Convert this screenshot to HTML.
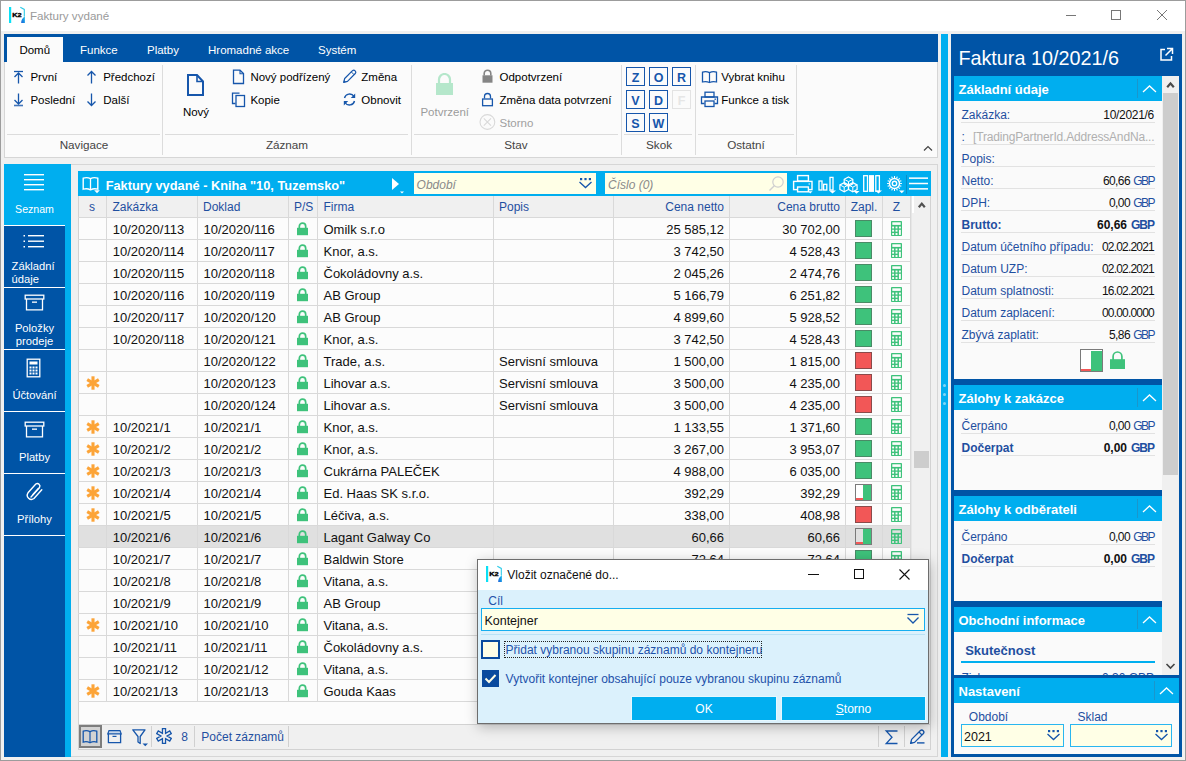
<!DOCTYPE html><html><head><meta charset="utf-8"><style>
*{box-sizing:border-box}
html,body{margin:0;padding:0}
body{width:1186px;height:761px;position:relative;overflow:hidden;background:#f0f0f0;font-family:"Liberation Sans",sans-serif;}
body div{position:absolute}
.t{white-space:nowrap}
</style></head><body>
<div style="left:0px;top:0px;width:1186px;height:761px;border:1px solid #9c9c9c;background:#f0f0f0"></div>
<div style="left:1px;top:1px;width:1184px;height:30px;background:#fff"></div>
<svg style="position:absolute;left:8px;top:6px;" width="18" height="18" viewBox="0 0 18 18"><defs><linearGradient id="kg" x1="0" y1="1" x2="1" y2="0"><stop offset="0" stop-color="#1a5fd8"/><stop offset="1" stop-color="#18c8f0"/></linearGradient></defs><rect x="1" y="1" width="2.2" height="16" fill="#0ae0f5"/><text x="4.2" y="11.2" font-family="Liberation Sans" font-weight="bold" font-size="6" textLength="9.4" lengthAdjust="spacingAndGlyphs" fill="#000" stroke="#000" stroke-width="0.35">K2</text><path d="M12.3 1.2L16.3 3.4V10.5" fill="none" stroke="#2ccbe8" stroke-width="1.1"/><path d="M16.9 10.2V17H13.2Q13 12.8 16.9 10.2Z" fill="url(#kg)"/></svg>
<div class="t" style="left:30px;top:10.00px;font-size:11.6px;line-height:11.6px;color:#9a9a9a;">Faktury vydané</div>
<div style="left:1066px;top:15px;width:10px;height:1px;background:#777"></div>
<div style="left:1111px;top:10px;width:10px;height:10px;border:1px solid #777"></div>
<svg style="position:absolute;left:1157px;top:10px;" width="10" height="10" viewBox="0 0 10 10"><path d="M0 0L10 10M10 0L0 10" stroke="#777" stroke-width="1"/></svg>
<div style="left:4px;top:34px;width:934px;height:28px;background:#0054a6"></div>
<div style="left:7px;top:37px;width:56px;height:25px;background:#fbfbfb"></div>
<div class="t" style="left:19.4px;top:45.00px;font-size:11.5px;line-height:11.5px;color:#000;">Domů</div>
<div class="t" style="left:80px;top:45.00px;font-size:11.5px;line-height:11.5px;color:#fff;">Funkce</div>
<div class="t" style="left:147px;top:45.00px;font-size:11.5px;line-height:11.5px;color:#fff;">Platby</div>
<div class="t" style="left:208px;top:45.00px;font-size:11.5px;line-height:11.5px;color:#fff;">Hromadné akce</div>
<div class="t" style="left:318px;top:45.00px;font-size:11.5px;line-height:11.5px;color:#fff;">Systém</div>
<div style="left:4px;top:62px;width:934px;height:96px;background:#fbfbfb;border:1px solid #d6d6d6;border-top:none"></div>
<div style="left:162px;top:65px;width:1px;height:90px;background:#dcdcdc"></div>
<div style="left:411px;top:65px;width:1px;height:90px;background:#dcdcdc"></div>
<div style="left:621px;top:65px;width:1px;height:90px;background:#dcdcdc"></div>
<div style="left:695px;top:65px;width:1px;height:90px;background:#dcdcdc"></div>
<div style="left:796px;top:65px;width:1px;height:90px;background:#dcdcdc"></div>
<div style="left:7px;top:134px;width:153px;height:1px;background:#dcdcdc"></div>
<div style="left:165px;top:134px;width:243px;height:1px;background:#dcdcdc"></div>
<div style="left:414px;top:134px;width:204px;height:1px;background:#dcdcdc"></div>
<div style="left:624px;top:134px;width:68px;height:1px;background:#dcdcdc"></div>
<div style="left:698px;top:134px;width:96px;height:1px;background:#dcdcdc"></div>
<div class="t" style="left:24.0px;width:120px;text-align:center;top:139.00px;font-size:11.7px;line-height:11.7px;color:#444;">Navigace</div>
<div class="t" style="left:227.0px;width:120px;text-align:center;top:139.00px;font-size:11.7px;line-height:11.7px;color:#444;">Záznam</div>
<div class="t" style="left:456.0px;width:120px;text-align:center;top:139.00px;font-size:11.7px;line-height:11.7px;color:#444;">Stav</div>
<div class="t" style="left:599.0px;width:120px;text-align:center;top:139.00px;font-size:11.7px;line-height:11.7px;color:#444;">Skok</div>
<div class="t" style="left:686.0px;width:120px;text-align:center;top:139.00px;font-size:11.7px;line-height:11.7px;color:#444;">Ostatní</div>
<svg style="position:absolute;left:13px;top:70px;" width="11" height="14" viewBox="0 0 11 14"><path d="M1 1.5H10" stroke="#1656ab" stroke-width="1.3"/><path d="M5.5 3V13.5M1.5 7L5.5 3L9.5 7" fill="none" stroke="#1656ab" stroke-width="1.3"/></svg>
<svg style="position:absolute;left:13px;top:93px;" width="11" height="14" viewBox="0 0 11 14"><path d="M1 12.5H10" stroke="#1656ab" stroke-width="1.6" opacity="0.8"/><path d="M5.5 0.5V11M1.5 7L5.5 11L9.5 7" fill="none" stroke="#1656ab" stroke-width="1.3"/></svg>
<svg style="position:absolute;left:86px;top:70px;" width="11" height="14" viewBox="0 0 11 14"><path d="M5.5 1.5V13.5M1.5 5.5L5.5 1.5L9.5 5.5" fill="none" stroke="#1656ab" stroke-width="1.3"/></svg>
<svg style="position:absolute;left:86px;top:93px;" width="11" height="14" viewBox="0 0 11 14"><path d="M5.5 0.5V12.5M1.5 8.5L5.5 12.5L9.5 8.5" fill="none" stroke="#1656ab" stroke-width="1.3"/></svg>
<div class="t" style="left:30.4px;top:72.00px;font-size:11.5px;line-height:11.5px;color:#000;">První</div>
<div class="t" style="left:30.4px;top:95.00px;font-size:11.5px;line-height:11.5px;color:#000;">Poslední</div>
<div class="t" style="left:103.2px;top:72.00px;font-size:11.5px;line-height:11.5px;color:#000;">Předchozí</div>
<div class="t" style="left:103.2px;top:95.00px;font-size:11.5px;line-height:11.5px;color:#000;">Další</div>
<svg style="position:absolute;left:186px;top:73px;" width="19" height="24" viewBox="0 0 19 24"><path d="M2 2H11L17 8.5V22H2Z" fill="none" stroke="#1656ab" stroke-width="2"/><path d="M11 2V8.5H17" fill="none" stroke="#1656ab" stroke-width="1.6"/></svg>
<div class="t" style="left:166.0px;width:60px;text-align:center;top:107.00px;font-size:11.5px;line-height:11.5px;color:#000;">Nový</div>
<svg style="position:absolute;left:232px;top:69px;" width="13" height="16" viewBox="0 0 13 16"><path d="M1.5 1.2H8L11.5 4.5V14.5H1.5Z" fill="none" stroke="#1656ab" stroke-width="1.3"/><path d="M8 1.2V4.7H11.5" fill="none" stroke="#1656ab" stroke-width="1.1"/></svg>
<svg style="position:absolute;left:231px;top:92px;" width="15" height="16" viewBox="0 0 15 16"><path d="M8.5 1.2H1.5V11.5H4.5" fill="none" stroke="#1656ab" stroke-width="1.3"/><rect x="5" y="3.5" width="8.5" height="11" fill="none" stroke="#1656ab" stroke-width="1.3"/></svg>
<div class="t" style="left:250.4px;top:72.00px;font-size:11.5px;line-height:11.5px;color:#000;">Nový podřízený</div>
<div class="t" style="left:250.4px;top:95.00px;font-size:11.5px;line-height:11.5px;color:#000;">Kopie</div>
<svg style="position:absolute;left:342px;top:69px;" width="15" height="15" viewBox="0 0 15 15"><path d="M1.7 13.3L2.7 9.5L10.5 1.7A2 2 0 0 1 13.3 4.5L5.5 12.3Z" fill="none" stroke="#1656ab" stroke-width="1.2" stroke-linejoin="round"/><path d="M9.3 2.9L12.1 5.7" stroke="#1656ab" stroke-width="1"/><path d="M1.3 13.7L2 11L4 13Z" fill="#1656ab"/></svg>
<svg style="position:absolute;left:342px;top:92px;" width="15" height="15" viewBox="0 0 15 15"><path d="M2.5 6A5.2 5.2 0 0 1 12 4.5" fill="none" stroke="#1656ab" stroke-width="1.4"/><path d="M13.2 1.5V6H8.8Z" fill="#1656ab"/><path d="M12.5 9A5.2 5.2 0 0 1 3 10.5" fill="none" stroke="#1656ab" stroke-width="1.4"/><path d="M1.8 13.5V9H6.2Z" fill="#1656ab"/></svg>
<div class="t" style="left:361.3px;top:72.00px;font-size:11.5px;line-height:11.5px;color:#000;">Změna</div>
<div class="t" style="left:361.3px;top:95.00px;font-size:11.5px;line-height:11.5px;color:#000;">Obnovit</div>
<svg style="position:absolute;left:434px;top:73px;" width="21" height="23" viewBox="0 0 21 23"><path d="M5 10V6.5A5.5 5.5 0 0 1 16 6.5V10" fill="none" stroke="#b5e7cb" stroke-width="2.2"/><rect x="2" y="10" width="17" height="12" fill="#b5e7cb"/></svg>
<div class="t" style="left:404.7px;width:80px;text-align:center;top:107.00px;font-size:11.5px;line-height:11.5px;color:#9b9b9b;">Potvrzení</div>
<svg style="position:absolute;left:481px;top:69px;" width="13" height="15" viewBox="0 0 13 15"><path d="M3.2 6.5V4.5A3.3 3.3 0 0 1 9.8 4.5V6.5" fill="none" stroke="#858585" stroke-width="1.6"/><rect x="1.5" y="6.3" width="10" height="7.4" fill="#858585"/></svg>
<svg style="position:absolute;left:481px;top:92px;" width="13" height="15" viewBox="0 0 13 15"><path d="M3.5 6.5V4.5A3 3 0 0 1 9.5 4.5V6.5" fill="none" stroke="#1656ab" stroke-width="1.3"/><rect x="1.6" y="7" width="9.8" height="6.7" fill="none" stroke="#1656ab" stroke-width="1.3"/></svg>
<svg style="position:absolute;left:479px;top:113px;" width="17" height="18" viewBox="0 0 17 18"><circle cx="8.4" cy="9" r="7.4" fill="none" stroke="#d9d9d9" stroke-width="1.1"/><path d="M4.8 5.4L12 12.6M12 5.4L4.8 12.6" stroke="#d9d9d9" stroke-width="1.1"/></svg>
<div class="t" style="left:499.5px;top:72.00px;font-size:11.5px;line-height:11.5px;color:#000;">Odpotvrzení</div>
<div class="t" style="left:499.5px;top:95.00px;font-size:11.5px;line-height:11.5px;color:#000;">Změna data potvrzení</div>
<div class="t" style="left:499.5px;top:118.00px;font-size:11.5px;line-height:11.5px;color:#a0a0a0;">Storno</div>
<div style="left:626px;top:67px;width:19px;height:19px;border:1.5px solid #1656ab"></div>
<div class="t" style="left:626.0px;width:19px;text-align:center;top:72.00px;font-size:12.5px;line-height:12.5px;color:#1656ab;font-weight:bold;">Z</div>
<div style="left:649px;top:67px;width:19px;height:19px;border:1.5px solid #1656ab"></div>
<div class="t" style="left:649.0px;width:19px;text-align:center;top:72.00px;font-size:12.5px;line-height:12.5px;color:#1656ab;font-weight:bold;">O</div>
<div style="left:672px;top:67px;width:19px;height:19px;border:1.5px solid #1656ab"></div>
<div class="t" style="left:672.0px;width:19px;text-align:center;top:72.00px;font-size:12.5px;line-height:12.5px;color:#1656ab;font-weight:bold;">R</div>
<div style="left:626px;top:90px;width:19px;height:19px;border:1.5px solid #1656ab"></div>
<div class="t" style="left:626.0px;width:19px;text-align:center;top:95.00px;font-size:12.5px;line-height:12.5px;color:#1656ab;font-weight:bold;">V</div>
<div style="left:649px;top:90px;width:19px;height:19px;border:1.5px solid #1656ab"></div>
<div class="t" style="left:649.0px;width:19px;text-align:center;top:95.00px;font-size:12.5px;line-height:12.5px;color:#1656ab;font-weight:bold;">D</div>
<div style="left:672px;top:90px;width:19px;height:19px;border:1px solid #e3e3e3"></div>
<div class="t" style="left:672.0px;width:19px;text-align:center;top:95.00px;font-size:12.5px;line-height:12.5px;color:#e6e6e6;font-weight:bold;">F</div>
<div style="left:626px;top:113px;width:19px;height:19px;border:1.5px solid #1656ab"></div>
<div class="t" style="left:626.0px;width:19px;text-align:center;top:118.00px;font-size:12.5px;line-height:12.5px;color:#1656ab;font-weight:bold;">S</div>
<div style="left:649px;top:113px;width:19px;height:19px;border:1.5px solid #1656ab"></div>
<div class="t" style="left:649.0px;width:19px;text-align:center;top:118.00px;font-size:12.5px;line-height:12.5px;color:#1656ab;font-weight:bold;">W</div>
<svg style="position:absolute;left:701px;top:70px;" width="17" height="14" viewBox="0 0 17 14"><path d="M1.5 2.2Q5 1 8.5 2.7Q12 1 15.5 2.2V12Q12 11 8.5 12.5Q5 11 1.5 12Z" fill="none" stroke="#1656ab" stroke-width="1.3"/><path d="M8.5 2.7V12.5" stroke="#1656ab" stroke-width="1.2"/></svg>
<div class="t" style="left:721.3px;top:72.00px;font-size:11.5px;line-height:11.5px;color:#000;">Vybrat knihu</div>
<svg style="position:absolute;left:700px;top:91px;" width="19" height="17" viewBox="0 0 19 17"><rect x="5" y="1.2" width="9" height="4.8" fill="none" stroke="#1656ab" stroke-width="1.3"/><path d="M4.5 12.5H1.5V6H17.5V12.5H14.5" fill="none" stroke="#1656ab" stroke-width="1.3"/><rect x="5" y="10" width="9" height="5.5" fill="none" stroke="#1656ab" stroke-width="1.3"/><rect x="14.5" y="7.5" width="1.4" height="1.4" fill="#1656ab"/></svg>
<div class="t" style="left:721.3px;top:95.00px;font-size:11.5px;line-height:11.5px;color:#000;">Funkce a tisk</div>
<svg style="position:absolute;left:923px;top:145px;" width="10" height="7" viewBox="0 0 10 7"><path d="M1 5.5L5 1.5L9 5.5" fill="none" stroke="#444" stroke-width="1.2"/></svg>
<div style="left:4px;top:164px;width:67px;height:593px;background:#0054a6"></div>
<div style="left:65px;top:164px;width:6px;height:593px;background:#00aeef"></div>
<div style="left:4px;top:164px;width:61px;height:61px;background:#00aeef"></div>
<div style="left:4px;top:225px;width:61px;height:1px;background:#fff"></div>
<div style="left:4px;top:287px;width:61px;height:1px;background:#fff"></div>
<div style="left:4px;top:349px;width:61px;height:1px;background:#fff"></div>
<div style="left:4px;top:411px;width:61px;height:1px;background:#fff"></div>
<div style="left:4px;top:473px;width:61px;height:1px;background:#fff"></div>
<div style="left:4px;top:535px;width:61px;height:1px;background:#fff"></div>
<svg style="position:absolute;left:23px;top:173px;" width="22" height="18" viewBox="0 0 22 18"><rect x="1" y="1" width="20" height="1.4" fill="#fff"/><rect x="1" y="6" width="20" height="1.4" fill="#fff"/><rect x="1" y="11" width="20" height="1.4" fill="#fff"/><rect x="1" y="16" width="20" height="1.4" fill="#fff"/></svg>
<svg style="position:absolute;left:22px;top:233px;" width="24" height="16" viewBox="0 0 24 16"><rect x="1.5" y="2.0" width="1.5" height="1.5" fill="#fff"/><rect x="6" y="2.0" width="16" height="1.4" fill="#fff"/><rect x="1.5" y="7.5" width="1.5" height="1.5" fill="#fff"/><rect x="6" y="7.5" width="16" height="1.4" fill="#fff"/><rect x="1.5" y="13.0" width="1.5" height="1.5" fill="#fff"/><rect x="6" y="13.0" width="16" height="1.4" fill="#fff"/></svg>
<svg style="position:absolute;left:24px;top:294px;" width="21" height="17" viewBox="0 0 21 17"><rect x="1.2" y="1.2" width="18.6" height="3.8" fill="none" stroke="#fff" stroke-width="1.3"/><path d="M2.5 5V15.8H18.5V5" fill="none" stroke="#fff" stroke-width="1.3"/><rect x="8" y="7.5" width="5" height="1.3" fill="#fff"/></svg>
<svg style="position:absolute;left:24px;top:421px;" width="21" height="17" viewBox="0 0 21 17"><rect x="1.2" y="1.2" width="18.6" height="3.8" fill="none" stroke="#fff" stroke-width="1.3"/><path d="M2.5 5V15.8H18.5V5" fill="none" stroke="#fff" stroke-width="1.3"/><rect x="8" y="7.5" width="5" height="1.3" fill="#fff"/></svg>
<svg style="position:absolute;left:26px;top:358px;" width="15" height="20" viewBox="0 0 15 20"><rect x="1.2" y="1.2" width="12.6" height="17.6" fill="none" stroke="#fff" stroke-width="1.3"/><rect x="3.5" y="3.5" width="8" height="3" fill="#fff"/><rect x="3.5" y="8.5" width="2" height="2" fill="#fff"/><rect x="3.5" y="11.5" width="2" height="2" fill="#fff"/><rect x="3.5" y="14.5" width="2" height="2" fill="#fff"/><rect x="6.5" y="8.5" width="2" height="2" fill="#fff"/><rect x="6.5" y="11.5" width="2" height="2" fill="#fff"/><rect x="6.5" y="14.5" width="2" height="2" fill="#fff"/><rect x="9.5" y="8.5" width="2" height="2" fill="#fff"/><rect x="9.5" y="11.5" width="2" height="2" fill="#fff"/><rect x="9.5" y="14.5" width="2" height="2" fill="#fff"/></svg>
<svg style="position:absolute;left:25px;top:481px;transform:rotate(0deg)" width="19" height="21" viewBox="0 0 19 21"><path d="M6 16L14.5 6.5A2.6 2.6 0 0 0 10.8 3L3 11.8A4.2 4.2 0 0 0 9 17.5L16.8 8.7" fill="none" stroke="#fff" stroke-width="1.4" stroke-linecap="round"/><path d="M8 13.5L13.2 7.6" fill="none" stroke="#fff" stroke-width="1.4" stroke-linecap="round"/></svg>
<div class="t" style="left:4.5px;width:60px;text-align:center;top:204.00px;font-size:10.6px;line-height:10.6px;color:#fff;">Seznam</div>
<div class="t" style="left:11.6px;top:261.00px;font-size:11.2px;line-height:11.2px;color:#fff;">Základní</div>
<div class="t" style="left:11.6px;top:274.00px;font-size:11.2px;line-height:11.2px;color:#fff;">údaje</div>
<div class="t" style="left:4.5px;width:60px;text-align:center;top:323.00px;font-size:11.2px;line-height:11.2px;color:#fff;">Položky</div>
<div class="t" style="left:4.5px;width:60px;text-align:center;top:336.00px;font-size:11.2px;line-height:11.2px;color:#fff;">prodeje</div>
<div class="t" style="left:4.5px;width:60px;text-align:center;top:390.00px;font-size:11.2px;line-height:11.2px;color:#fff;">Účtování</div>
<div class="t" style="left:4.5px;width:60px;text-align:center;top:452.00px;font-size:11.2px;line-height:11.2px;color:#fff;">Platby</div>
<div class="t" style="left:4.5px;width:60px;text-align:center;top:514.00px;font-size:11.2px;line-height:11.2px;color:#fff;">Přílohy</div>
<div style="left:71px;top:164px;width:867px;height:593px;border:1px solid #d6d6d6;border-left:none;background:#f0f0f0"></div>
<div style="left:78px;top:171px;width:853px;height:25px;background:#00aeef"></div>
<svg style="position:absolute;left:82px;top:176px;" width="18" height="18" viewBox="0 0 18 18"><path d="M1.2 2.2Q5 0.8 8.5 2.6Q12 0.8 15.8 2.2V13.2Q12 12 8.5 13.8Q5 12 1.2 13.2Z" fill="none" stroke="#fff" stroke-width="1.4"/><path d="M8.5 2.6V13.8" stroke="#fff" stroke-width="1.3"/><path d="M12.2 14.2H17.8L15 17.2Z" fill="#fff"/></svg>
<div class="t" style="left:105.7px;top:180.00px;font-size:12.8px;line-height:12.8px;color:#fff;font-weight:bold;">Faktury vydané - Kniha "10, Tuzemsko"</div>
<svg style="position:absolute;left:390px;top:176px;" width="16" height="19" viewBox="0 0 16 19"><path d="M2 2L9 8L2 14Z" fill="#fff"/><path d="M10 15.5H14L12 17.5Z" fill="#fff"/></svg>
<div style="left:414px;top:173px;width:182px;height:21px;background:#ffffe6"></div>
<div class="t" style="left:416.6px;top:179.00px;font-size:12px;line-height:12px;color:#8a8a8a;font-style:italic">Období</div>
<svg style="position:absolute;left:578px;top:177px;" width="15" height="12" viewBox="0 0 15 12"><rect x="2" y="1" width="2.2" height="2.2" fill="#1656ab"/><rect x="6.4" y="1" width="2.2" height="2.2" fill="#1656ab"/><rect x="10.8" y="1" width="2.2" height="2.2" fill="#1656ab"/><path d="M1.5 5L7.5 10.5L13.5 5" fill="none" stroke="#1656ab" stroke-width="1.3"/></svg>
<div style="left:605px;top:173px;width:182px;height:21px;background:#ffffe6"></div>
<div class="t" style="left:608px;top:179.00px;font-size:12px;line-height:12px;color:#8a8a8a;font-style:italic">Číslo (0)</div>
<svg style="position:absolute;left:768px;top:175px;" width="17" height="17" viewBox="0 0 17 17"><circle cx="10" cy="7" r="5.2" fill="none" stroke="#cfcfcf" stroke-width="1.2"/><path d="M6.3 10.7L1.5 15.5" stroke="#cfcfcf" stroke-width="1.4"/></svg>
<svg style="position:absolute;left:791px;top:174px;" width="23" height="20" viewBox="0 0 23 20"><rect x="6.6" y="1.6" width="10.8" height="5.4" fill="none" stroke="#fff" stroke-width="1.4"/><rect x="2.6" y="7.4" width="18.4" height="8.2" fill="none" stroke="#fff" stroke-width="1.4"/><rect x="6.6" y="13" width="10.8" height="4.8" fill="#00aeef" stroke="#fff" stroke-width="1.4"/><rect x="17.6" y="9.4" width="1.2" height="1.2" fill="#fff"/><path d="M17 17.2H21.5L19.25 19.5Z" fill="#fff"/></svg>
<svg style="position:absolute;left:816px;top:174px;" width="21" height="21" viewBox="0 0 21 21"><rect x="3" y="7" width="3" height="9" fill="none" stroke="#fff" stroke-width="1.3"/><rect x="7.6" y="10.3" width="3.2" height="5.7" fill="none" stroke="#fff" stroke-width="1.3"/><rect x="14" y="3.4" width="3" height="12.6" fill="none" stroke="#fff" stroke-width="1.3"/><path d="M13 16.5H20L16.5 19.5Z" fill="#fff"/></svg>
<svg style="position:absolute;left:839px;top:174px;" width="21" height="21" viewBox="0 0 21 21"><path d="M9.50 3.00L13.80 5.30L13.80 9.90L9.50 12.20L5.20 9.90L5.20 5.30Z" fill="none" stroke="#fff" stroke-width="1.2"/><path d="M5.20 5.30L9.50 7.60L13.80 5.30M9.50 7.60V12.20" fill="none" stroke="#fff" stroke-width="1"/><path d="M5.20 8.60L9.50 10.90L9.50 15.50L5.20 17.80L0.90 15.50L0.90 10.90Z" fill="none" stroke="#fff" stroke-width="1.2"/><path d="M0.90 10.90L5.20 13.20L9.50 10.90M5.20 13.20V17.80" fill="none" stroke="#fff" stroke-width="1"/><path d="M13.80 8.60L18.10 10.90L18.10 15.50L13.80 17.80L9.50 15.50L9.50 10.90Z" fill="none" stroke="#fff" stroke-width="1.2"/><path d="M9.50 10.90L13.80 13.20L18.10 10.90M13.80 13.20V17.80" fill="none" stroke="#fff" stroke-width="1"/><path d="M14.5 17H20.5L17.5 19.8Z" fill="#fff"/></svg>
<svg style="position:absolute;left:862px;top:174px;" width="21" height="21" viewBox="0 0 21 21"><rect x="1.7" y="1.7" width="3.8" height="15.6" fill="none" stroke="#fff" stroke-width="1.3"/><rect x="7" y="1.1" width="5" height="16.8" fill="#fff"/><rect x="13.8" y="1.7" width="3.6" height="15.6" fill="none" stroke="#fff" stroke-width="1.3"/><path d="M13 16.5H20L16.5 19.5Z" fill="#fff"/></svg>
<svg style="position:absolute;left:886px;top:174px;" width="20" height="21" viewBox="0 0 20 21"><circle cx="8.5" cy="9.5" r="5" fill="none" stroke="#fff" stroke-width="1.5"/><circle cx="8.5" cy="9.5" r="2.2" fill="none" stroke="#fff" stroke-width="1.4"/><path d="M14.10 9.50L15.90 9.50M13.67 11.64L15.34 12.33M12.46 13.46L13.73 14.73M10.64 14.67L11.33 16.34M8.50 15.10L8.50 16.90M6.36 14.67L5.67 16.34M4.54 13.46L3.27 14.73M3.33 11.64L1.66 12.33M2.90 9.50L1.10 9.50M3.33 7.36L1.66 6.67M4.54 5.54L3.27 4.27M6.36 4.33L5.67 2.66M8.50 3.90L8.50 2.10M10.64 4.33L11.33 2.66M12.46 5.54L13.73 4.27M13.67 7.36L15.34 6.67" stroke="#fff" stroke-width="1.1"/><path d="M13 16.4H18.5L15.75 19.2Z" fill="#fff"/></svg>
<div style="left:906px;top:175px;width:1px;height:19px;background:#0a8fc8"></div>
<svg style="position:absolute;left:908px;top:176px;" width="22" height="16" viewBox="0 0 22 16"><rect x="1" y="1.4" width="19" height="1.5" fill="#fff"/><rect x="1" y="6.75" width="19" height="1.5" fill="#fff"/><rect x="1" y="12.1" width="19" height="1.5" fill="#fff"/></svg>
<div style="left:78px;top:196px;width:853px;height:22px;background:#f0f0f0;border-left:1px solid #d2d2d2"></div>
<div style="left:106px;top:196px;width:1px;height:505px;background:#d9d9d9"></div>
<div style="left:197px;top:196px;width:1px;height:505px;background:#d9d9d9"></div>
<div style="left:288px;top:196px;width:1px;height:505px;background:#d9d9d9"></div>
<div style="left:317px;top:196px;width:1px;height:505px;background:#d9d9d9"></div>
<div style="left:493px;top:196px;width:1px;height:505px;background:#d9d9d9"></div>
<div style="left:613px;top:196px;width:1px;height:505px;background:#d9d9d9"></div>
<div style="left:729px;top:196px;width:1px;height:505px;background:#d9d9d9"></div>
<div style="left:845px;top:196px;width:1px;height:505px;background:#d9d9d9"></div>
<div style="left:882px;top:196px;width:1px;height:505px;background:#d9d9d9"></div>
<div style="left:910px;top:196px;width:1px;height:505px;background:#d9d9d9"></div>
<div style="left:78px;top:217px;width:833px;height:1px;background:#d9d9d9"></div>
<div class="t" style="left:82.0px;width:20px;text-align:center;top:201.00px;font-size:12px;line-height:12px;color:#1f4fa0;">s</div>
<div class="t" style="left:112.5px;top:201.00px;font-size:12px;line-height:12px;color:#1f4fa0;">Zakázka</div>
<div class="t" style="left:203px;top:201.00px;font-size:12px;line-height:12px;color:#1f4fa0;">Doklad</div>
<div class="t" style="left:294px;top:201.00px;font-size:12px;line-height:12px;color:#1f4fa0;">P/S</div>
<div class="t" style="left:323.5px;top:201.00px;font-size:12px;line-height:12px;color:#1f4fa0;">Firma</div>
<div class="t" style="left:499px;top:201.00px;font-size:12px;line-height:12px;color:#1f4fa0;">Popis</div>
<div class="t" style="right:462px;top:201.00px;font-size:12px;line-height:12px;color:#1f4fa0;">Cena netto</div>
<div class="t" style="right:346px;top:201.00px;font-size:12px;line-height:12px;color:#1f4fa0;">Cena brutto</div>
<div class="t" style="left:846.0px;width:36px;text-align:center;top:201.00px;font-size:12px;line-height:12px;color:#1f4fa0;">Zapl.</div>
<div class="t" style="left:886.5px;width:20px;text-align:center;top:201.00px;font-size:12px;line-height:12px;color:#1f4fa0;">Z</div>
<div style="left:78px;top:218px;width:833px;height:506px;background:#fcfcfc;border-left:1px solid #d2d2d2"></div>
<div style="left:78px;top:239px;width:833px;height:1px;background:#d9d9d9"></div>
<div class="t" style="left:112.8px;top:223.00px;font-size:13px;line-height:13px;color:#111;">10/2020/113</div>
<div class="t" style="left:203.5px;top:223.00px;font-size:13px;line-height:13px;color:#111;">10/2020/116</div>
<svg style="position:absolute;left:296px;top:222px;" width="13" height="14" viewBox="0 0 13 14"><path d="M3.3 6V4.4A3.2 3.2 0 0 1 9.7 4.4V6" fill="none" stroke="#3ec27b" stroke-width="1.7"/><rect x="1" y="5.8" width="11" height="7.4" fill="#3ec27b"/></svg>
<div class="t" style="left:323.5px;top:223.00px;font-size:13px;line-height:13px;color:#111;">Omilk s.r.o</div>
<div class="t" style="right:462px;top:223.00px;font-size:13px;line-height:13px;color:#111;">25 585,12</div>
<div class="t" style="right:346px;top:223.00px;font-size:13px;line-height:13px;color:#111;">30 702,00</div>
<div style="left:855px;top:220px;width:17px;height:17px;background:#3ec27b;border:1px solid #4a8a66"></div>
<svg style="position:absolute;left:891px;top:221px;" width="11" height="15" viewBox="0 0 11 15"><rect x="0" y="0" width="11" height="15" rx="0.8" fill="#3ec27b"/><rect x="1.3" y="1.3" width="8.4" height="2.6" fill="#fcfcfc"/><rect x="1.1500000000000001" y="5.55" width="1.9" height="1.9" fill="#fcfcfc"/><rect x="4.55" y="5.55" width="1.9" height="1.9" fill="#fcfcfc"/><rect x="7.95" y="5.55" width="1.9" height="1.9" fill="#fcfcfc"/><rect x="1.1500000000000001" y="8.75" width="1.9" height="1.9" fill="#fcfcfc"/><rect x="4.55" y="8.75" width="1.9" height="1.9" fill="#fcfcfc"/><rect x="1.1500000000000001" y="12.05" width="1.9" height="1.9" fill="#fcfcfc"/><rect x="4.55" y="12.05" width="1.9" height="1.9" fill="#fcfcfc"/><rect x="7.95" y="8.75" width="1.9" height="5.2" fill="#fcfcfc"/></svg>
<div style="left:78px;top:261px;width:833px;height:1px;background:#d9d9d9"></div>
<div class="t" style="left:112.8px;top:245.00px;font-size:13px;line-height:13px;color:#111;">10/2020/114</div>
<div class="t" style="left:203.5px;top:245.00px;font-size:13px;line-height:13px;color:#111;">10/2020/117</div>
<svg style="position:absolute;left:296px;top:244px;" width="13" height="14" viewBox="0 0 13 14"><path d="M3.3 6V4.4A3.2 3.2 0 0 1 9.7 4.4V6" fill="none" stroke="#3ec27b" stroke-width="1.7"/><rect x="1" y="5.8" width="11" height="7.4" fill="#3ec27b"/></svg>
<div class="t" style="left:323.5px;top:245.00px;font-size:13px;line-height:13px;color:#111;">Knor, a.s.</div>
<div class="t" style="right:462px;top:245.00px;font-size:13px;line-height:13px;color:#111;">3 742,50</div>
<div class="t" style="right:346px;top:245.00px;font-size:13px;line-height:13px;color:#111;">4 528,43</div>
<div style="left:855px;top:242px;width:17px;height:17px;background:#3ec27b;border:1px solid #4a8a66"></div>
<svg style="position:absolute;left:891px;top:243px;" width="11" height="15" viewBox="0 0 11 15"><rect x="0" y="0" width="11" height="15" rx="0.8" fill="#3ec27b"/><rect x="1.3" y="1.3" width="8.4" height="2.6" fill="#fcfcfc"/><rect x="1.1500000000000001" y="5.55" width="1.9" height="1.9" fill="#fcfcfc"/><rect x="4.55" y="5.55" width="1.9" height="1.9" fill="#fcfcfc"/><rect x="7.95" y="5.55" width="1.9" height="1.9" fill="#fcfcfc"/><rect x="1.1500000000000001" y="8.75" width="1.9" height="1.9" fill="#fcfcfc"/><rect x="4.55" y="8.75" width="1.9" height="1.9" fill="#fcfcfc"/><rect x="1.1500000000000001" y="12.05" width="1.9" height="1.9" fill="#fcfcfc"/><rect x="4.55" y="12.05" width="1.9" height="1.9" fill="#fcfcfc"/><rect x="7.95" y="8.75" width="1.9" height="5.2" fill="#fcfcfc"/></svg>
<div style="left:78px;top:283px;width:833px;height:1px;background:#d9d9d9"></div>
<div class="t" style="left:112.8px;top:267.00px;font-size:13px;line-height:13px;color:#111;">10/2020/115</div>
<div class="t" style="left:203.5px;top:267.00px;font-size:13px;line-height:13px;color:#111;">10/2020/118</div>
<svg style="position:absolute;left:296px;top:266px;" width="13" height="14" viewBox="0 0 13 14"><path d="M3.3 6V4.4A3.2 3.2 0 0 1 9.7 4.4V6" fill="none" stroke="#3ec27b" stroke-width="1.7"/><rect x="1" y="5.8" width="11" height="7.4" fill="#3ec27b"/></svg>
<div class="t" style="left:323.5px;top:267.00px;font-size:13px;line-height:13px;color:#111;">Čokoládovny a.s.</div>
<div class="t" style="right:462px;top:267.00px;font-size:13px;line-height:13px;color:#111;">2 045,26</div>
<div class="t" style="right:346px;top:267.00px;font-size:13px;line-height:13px;color:#111;">2 474,76</div>
<div style="left:855px;top:264px;width:17px;height:17px;background:#3ec27b;border:1px solid #4a8a66"></div>
<svg style="position:absolute;left:891px;top:265px;" width="11" height="15" viewBox="0 0 11 15"><rect x="0" y="0" width="11" height="15" rx="0.8" fill="#3ec27b"/><rect x="1.3" y="1.3" width="8.4" height="2.6" fill="#fcfcfc"/><rect x="1.1500000000000001" y="5.55" width="1.9" height="1.9" fill="#fcfcfc"/><rect x="4.55" y="5.55" width="1.9" height="1.9" fill="#fcfcfc"/><rect x="7.95" y="5.55" width="1.9" height="1.9" fill="#fcfcfc"/><rect x="1.1500000000000001" y="8.75" width="1.9" height="1.9" fill="#fcfcfc"/><rect x="4.55" y="8.75" width="1.9" height="1.9" fill="#fcfcfc"/><rect x="1.1500000000000001" y="12.05" width="1.9" height="1.9" fill="#fcfcfc"/><rect x="4.55" y="12.05" width="1.9" height="1.9" fill="#fcfcfc"/><rect x="7.95" y="8.75" width="1.9" height="5.2" fill="#fcfcfc"/></svg>
<div style="left:78px;top:305px;width:833px;height:1px;background:#d9d9d9"></div>
<div class="t" style="left:112.8px;top:289.00px;font-size:13px;line-height:13px;color:#111;">10/2020/116</div>
<div class="t" style="left:203.5px;top:289.00px;font-size:13px;line-height:13px;color:#111;">10/2020/119</div>
<svg style="position:absolute;left:296px;top:288px;" width="13" height="14" viewBox="0 0 13 14"><path d="M3.3 6V4.4A3.2 3.2 0 0 1 9.7 4.4V6" fill="none" stroke="#3ec27b" stroke-width="1.7"/><rect x="1" y="5.8" width="11" height="7.4" fill="#3ec27b"/></svg>
<div class="t" style="left:323.5px;top:289.00px;font-size:13px;line-height:13px;color:#111;">AB Group</div>
<div class="t" style="right:462px;top:289.00px;font-size:13px;line-height:13px;color:#111;">5 166,79</div>
<div class="t" style="right:346px;top:289.00px;font-size:13px;line-height:13px;color:#111;">6 251,82</div>
<div style="left:855px;top:286px;width:17px;height:17px;background:#3ec27b;border:1px solid #4a8a66"></div>
<svg style="position:absolute;left:891px;top:287px;" width="11" height="15" viewBox="0 0 11 15"><rect x="0" y="0" width="11" height="15" rx="0.8" fill="#3ec27b"/><rect x="1.3" y="1.3" width="8.4" height="2.6" fill="#fcfcfc"/><rect x="1.1500000000000001" y="5.55" width="1.9" height="1.9" fill="#fcfcfc"/><rect x="4.55" y="5.55" width="1.9" height="1.9" fill="#fcfcfc"/><rect x="7.95" y="5.55" width="1.9" height="1.9" fill="#fcfcfc"/><rect x="1.1500000000000001" y="8.75" width="1.9" height="1.9" fill="#fcfcfc"/><rect x="4.55" y="8.75" width="1.9" height="1.9" fill="#fcfcfc"/><rect x="1.1500000000000001" y="12.05" width="1.9" height="1.9" fill="#fcfcfc"/><rect x="4.55" y="12.05" width="1.9" height="1.9" fill="#fcfcfc"/><rect x="7.95" y="8.75" width="1.9" height="5.2" fill="#fcfcfc"/></svg>
<div style="left:78px;top:327px;width:833px;height:1px;background:#d9d9d9"></div>
<div class="t" style="left:112.8px;top:311.00px;font-size:13px;line-height:13px;color:#111;">10/2020/117</div>
<div class="t" style="left:203.5px;top:311.00px;font-size:13px;line-height:13px;color:#111;">10/2020/120</div>
<svg style="position:absolute;left:296px;top:310px;" width="13" height="14" viewBox="0 0 13 14"><path d="M3.3 6V4.4A3.2 3.2 0 0 1 9.7 4.4V6" fill="none" stroke="#3ec27b" stroke-width="1.7"/><rect x="1" y="5.8" width="11" height="7.4" fill="#3ec27b"/></svg>
<div class="t" style="left:323.5px;top:311.00px;font-size:13px;line-height:13px;color:#111;">AB Group</div>
<div class="t" style="right:462px;top:311.00px;font-size:13px;line-height:13px;color:#111;">4 899,60</div>
<div class="t" style="right:346px;top:311.00px;font-size:13px;line-height:13px;color:#111;">5 928,52</div>
<div style="left:855px;top:308px;width:17px;height:17px;background:#3ec27b;border:1px solid #4a8a66"></div>
<svg style="position:absolute;left:891px;top:309px;" width="11" height="15" viewBox="0 0 11 15"><rect x="0" y="0" width="11" height="15" rx="0.8" fill="#3ec27b"/><rect x="1.3" y="1.3" width="8.4" height="2.6" fill="#fcfcfc"/><rect x="1.1500000000000001" y="5.55" width="1.9" height="1.9" fill="#fcfcfc"/><rect x="4.55" y="5.55" width="1.9" height="1.9" fill="#fcfcfc"/><rect x="7.95" y="5.55" width="1.9" height="1.9" fill="#fcfcfc"/><rect x="1.1500000000000001" y="8.75" width="1.9" height="1.9" fill="#fcfcfc"/><rect x="4.55" y="8.75" width="1.9" height="1.9" fill="#fcfcfc"/><rect x="1.1500000000000001" y="12.05" width="1.9" height="1.9" fill="#fcfcfc"/><rect x="4.55" y="12.05" width="1.9" height="1.9" fill="#fcfcfc"/><rect x="7.95" y="8.75" width="1.9" height="5.2" fill="#fcfcfc"/></svg>
<div style="left:78px;top:349px;width:833px;height:1px;background:#d9d9d9"></div>
<div class="t" style="left:112.8px;top:333.00px;font-size:13px;line-height:13px;color:#111;">10/2020/118</div>
<div class="t" style="left:203.5px;top:333.00px;font-size:13px;line-height:13px;color:#111;">10/2020/121</div>
<svg style="position:absolute;left:296px;top:332px;" width="13" height="14" viewBox="0 0 13 14"><path d="M3.3 6V4.4A3.2 3.2 0 0 1 9.7 4.4V6" fill="none" stroke="#3ec27b" stroke-width="1.7"/><rect x="1" y="5.8" width="11" height="7.4" fill="#3ec27b"/></svg>
<div class="t" style="left:323.5px;top:333.00px;font-size:13px;line-height:13px;color:#111;">Knor, a.s.</div>
<div class="t" style="right:462px;top:333.00px;font-size:13px;line-height:13px;color:#111;">3 742,50</div>
<div class="t" style="right:346px;top:333.00px;font-size:13px;line-height:13px;color:#111;">4 528,43</div>
<div style="left:855px;top:330px;width:17px;height:17px;background:#3ec27b;border:1px solid #4a8a66"></div>
<svg style="position:absolute;left:891px;top:331px;" width="11" height="15" viewBox="0 0 11 15"><rect x="0" y="0" width="11" height="15" rx="0.8" fill="#3ec27b"/><rect x="1.3" y="1.3" width="8.4" height="2.6" fill="#fcfcfc"/><rect x="1.1500000000000001" y="5.55" width="1.9" height="1.9" fill="#fcfcfc"/><rect x="4.55" y="5.55" width="1.9" height="1.9" fill="#fcfcfc"/><rect x="7.95" y="5.55" width="1.9" height="1.9" fill="#fcfcfc"/><rect x="1.1500000000000001" y="8.75" width="1.9" height="1.9" fill="#fcfcfc"/><rect x="4.55" y="8.75" width="1.9" height="1.9" fill="#fcfcfc"/><rect x="1.1500000000000001" y="12.05" width="1.9" height="1.9" fill="#fcfcfc"/><rect x="4.55" y="12.05" width="1.9" height="1.9" fill="#fcfcfc"/><rect x="7.95" y="8.75" width="1.9" height="5.2" fill="#fcfcfc"/></svg>
<div style="left:78px;top:371px;width:833px;height:1px;background:#d9d9d9"></div>
<div class="t" style="left:203.5px;top:355.00px;font-size:13px;line-height:13px;color:#111;">10/2020/122</div>
<svg style="position:absolute;left:296px;top:354px;" width="13" height="14" viewBox="0 0 13 14"><path d="M3.3 6V4.4A3.2 3.2 0 0 1 9.7 4.4V6" fill="none" stroke="#3ec27b" stroke-width="1.7"/><rect x="1" y="5.8" width="11" height="7.4" fill="#3ec27b"/></svg>
<div class="t" style="left:323.5px;top:355.00px;font-size:13px;line-height:13px;color:#111;">Trade, a.s.</div>
<div class="t" style="left:499px;top:355.00px;font-size:13px;line-height:13px;color:#111;">Servisní smlouva</div>
<div class="t" style="right:462px;top:355.00px;font-size:13px;line-height:13px;color:#111;">1 500,00</div>
<div class="t" style="right:346px;top:355.00px;font-size:13px;line-height:13px;color:#111;">1 815,00</div>
<div style="left:855px;top:352px;width:17px;height:17px;background:#f25757;border:1px solid #8a4a4a"></div>
<svg style="position:absolute;left:891px;top:353px;" width="11" height="15" viewBox="0 0 11 15"><rect x="0" y="0" width="11" height="15" rx="0.8" fill="#3ec27b"/><rect x="1.3" y="1.3" width="8.4" height="2.6" fill="#fcfcfc"/><rect x="1.1500000000000001" y="5.55" width="1.9" height="1.9" fill="#fcfcfc"/><rect x="4.55" y="5.55" width="1.9" height="1.9" fill="#fcfcfc"/><rect x="7.95" y="5.55" width="1.9" height="1.9" fill="#fcfcfc"/><rect x="1.1500000000000001" y="8.75" width="1.9" height="1.9" fill="#fcfcfc"/><rect x="4.55" y="8.75" width="1.9" height="1.9" fill="#fcfcfc"/><rect x="1.1500000000000001" y="12.05" width="1.9" height="1.9" fill="#fcfcfc"/><rect x="4.55" y="12.05" width="1.9" height="1.9" fill="#fcfcfc"/><rect x="7.95" y="8.75" width="1.9" height="5.2" fill="#fcfcfc"/></svg>
<div style="left:78px;top:393px;width:833px;height:1px;background:#d9d9d9"></div>
<svg style="position:absolute;left:85.6px;top:376px;" width="14" height="14" viewBox="0 0 14 14"><g stroke="#fca438" stroke-width="3.1"><path d="M7 0.3V13.7"/><path d="M1.2 3.65L12.8 10.35"/><path d="M1.2 10.35L12.8 3.65"/></g></svg>
<div class="t" style="left:203.5px;top:377.00px;font-size:13px;line-height:13px;color:#111;">10/2020/123</div>
<svg style="position:absolute;left:296px;top:376px;" width="13" height="14" viewBox="0 0 13 14"><path d="M3.3 6V4.4A3.2 3.2 0 0 1 9.7 4.4V6" fill="none" stroke="#3ec27b" stroke-width="1.7"/><rect x="1" y="5.8" width="11" height="7.4" fill="#3ec27b"/></svg>
<div class="t" style="left:323.5px;top:377.00px;font-size:13px;line-height:13px;color:#111;">Lihovar a.s.</div>
<div class="t" style="left:499px;top:377.00px;font-size:13px;line-height:13px;color:#111;">Servisní smlouva</div>
<div class="t" style="right:462px;top:377.00px;font-size:13px;line-height:13px;color:#111;">3 500,00</div>
<div class="t" style="right:346px;top:377.00px;font-size:13px;line-height:13px;color:#111;">4 235,00</div>
<div style="left:855px;top:374px;width:17px;height:17px;background:#f25757;border:1px solid #8a4a4a"></div>
<svg style="position:absolute;left:891px;top:375px;" width="11" height="15" viewBox="0 0 11 15"><rect x="0" y="0" width="11" height="15" rx="0.8" fill="#3ec27b"/><rect x="1.3" y="1.3" width="8.4" height="2.6" fill="#fcfcfc"/><rect x="1.1500000000000001" y="5.55" width="1.9" height="1.9" fill="#fcfcfc"/><rect x="4.55" y="5.55" width="1.9" height="1.9" fill="#fcfcfc"/><rect x="7.95" y="5.55" width="1.9" height="1.9" fill="#fcfcfc"/><rect x="1.1500000000000001" y="8.75" width="1.9" height="1.9" fill="#fcfcfc"/><rect x="4.55" y="8.75" width="1.9" height="1.9" fill="#fcfcfc"/><rect x="1.1500000000000001" y="12.05" width="1.9" height="1.9" fill="#fcfcfc"/><rect x="4.55" y="12.05" width="1.9" height="1.9" fill="#fcfcfc"/><rect x="7.95" y="8.75" width="1.9" height="5.2" fill="#fcfcfc"/></svg>
<div style="left:78px;top:415px;width:833px;height:1px;background:#d9d9d9"></div>
<div class="t" style="left:203.5px;top:399.00px;font-size:13px;line-height:13px;color:#111;">10/2020/124</div>
<svg style="position:absolute;left:296px;top:398px;" width="13" height="14" viewBox="0 0 13 14"><path d="M3.3 6V4.4A3.2 3.2 0 0 1 9.7 4.4V6" fill="none" stroke="#3ec27b" stroke-width="1.7"/><rect x="1" y="5.8" width="11" height="7.4" fill="#3ec27b"/></svg>
<div class="t" style="left:323.5px;top:399.00px;font-size:13px;line-height:13px;color:#111;">Lihovar a.s.</div>
<div class="t" style="left:499px;top:399.00px;font-size:13px;line-height:13px;color:#111;">Servisní smlouva</div>
<div class="t" style="right:462px;top:399.00px;font-size:13px;line-height:13px;color:#111;">3 500,00</div>
<div class="t" style="right:346px;top:399.00px;font-size:13px;line-height:13px;color:#111;">4 235,00</div>
<div style="left:855px;top:396px;width:17px;height:17px;background:#f25757;border:1px solid #8a4a4a"></div>
<svg style="position:absolute;left:891px;top:397px;" width="11" height="15" viewBox="0 0 11 15"><rect x="0" y="0" width="11" height="15" rx="0.8" fill="#3ec27b"/><rect x="1.3" y="1.3" width="8.4" height="2.6" fill="#fcfcfc"/><rect x="1.1500000000000001" y="5.55" width="1.9" height="1.9" fill="#fcfcfc"/><rect x="4.55" y="5.55" width="1.9" height="1.9" fill="#fcfcfc"/><rect x="7.95" y="5.55" width="1.9" height="1.9" fill="#fcfcfc"/><rect x="1.1500000000000001" y="8.75" width="1.9" height="1.9" fill="#fcfcfc"/><rect x="4.55" y="8.75" width="1.9" height="1.9" fill="#fcfcfc"/><rect x="1.1500000000000001" y="12.05" width="1.9" height="1.9" fill="#fcfcfc"/><rect x="4.55" y="12.05" width="1.9" height="1.9" fill="#fcfcfc"/><rect x="7.95" y="8.75" width="1.9" height="5.2" fill="#fcfcfc"/></svg>
<div style="left:78px;top:437px;width:833px;height:1px;background:#d9d9d9"></div>
<svg style="position:absolute;left:85.6px;top:420px;" width="14" height="14" viewBox="0 0 14 14"><g stroke="#fca438" stroke-width="3.1"><path d="M7 0.3V13.7"/><path d="M1.2 3.65L12.8 10.35"/><path d="M1.2 10.35L12.8 3.65"/></g></svg>
<div class="t" style="left:112.8px;top:421.00px;font-size:13px;line-height:13px;color:#111;">10/2021/1</div>
<div class="t" style="left:203.5px;top:421.00px;font-size:13px;line-height:13px;color:#111;">10/2021/1</div>
<svg style="position:absolute;left:296px;top:420px;" width="13" height="14" viewBox="0 0 13 14"><path d="M3.3 6V4.4A3.2 3.2 0 0 1 9.7 4.4V6" fill="none" stroke="#3ec27b" stroke-width="1.7"/><rect x="1" y="5.8" width="11" height="7.4" fill="#3ec27b"/></svg>
<div class="t" style="left:323.5px;top:421.00px;font-size:13px;line-height:13px;color:#111;">Knor, a.s.</div>
<div class="t" style="right:462px;top:421.00px;font-size:13px;line-height:13px;color:#111;">1 133,55</div>
<div class="t" style="right:346px;top:421.00px;font-size:13px;line-height:13px;color:#111;">1 371,60</div>
<div style="left:855px;top:418px;width:17px;height:17px;background:#3ec27b;border:1px solid #4a8a66"></div>
<svg style="position:absolute;left:891px;top:419px;" width="11" height="15" viewBox="0 0 11 15"><rect x="0" y="0" width="11" height="15" rx="0.8" fill="#3ec27b"/><rect x="1.3" y="1.3" width="8.4" height="2.6" fill="#fcfcfc"/><rect x="1.1500000000000001" y="5.55" width="1.9" height="1.9" fill="#fcfcfc"/><rect x="4.55" y="5.55" width="1.9" height="1.9" fill="#fcfcfc"/><rect x="7.95" y="5.55" width="1.9" height="1.9" fill="#fcfcfc"/><rect x="1.1500000000000001" y="8.75" width="1.9" height="1.9" fill="#fcfcfc"/><rect x="4.55" y="8.75" width="1.9" height="1.9" fill="#fcfcfc"/><rect x="1.1500000000000001" y="12.05" width="1.9" height="1.9" fill="#fcfcfc"/><rect x="4.55" y="12.05" width="1.9" height="1.9" fill="#fcfcfc"/><rect x="7.95" y="8.75" width="1.9" height="5.2" fill="#fcfcfc"/></svg>
<div style="left:78px;top:459px;width:833px;height:1px;background:#d9d9d9"></div>
<svg style="position:absolute;left:85.6px;top:442px;" width="14" height="14" viewBox="0 0 14 14"><g stroke="#fca438" stroke-width="3.1"><path d="M7 0.3V13.7"/><path d="M1.2 3.65L12.8 10.35"/><path d="M1.2 10.35L12.8 3.65"/></g></svg>
<div class="t" style="left:112.8px;top:443.00px;font-size:13px;line-height:13px;color:#111;">10/2021/2</div>
<div class="t" style="left:203.5px;top:443.00px;font-size:13px;line-height:13px;color:#111;">10/2021/2</div>
<svg style="position:absolute;left:296px;top:442px;" width="13" height="14" viewBox="0 0 13 14"><path d="M3.3 6V4.4A3.2 3.2 0 0 1 9.7 4.4V6" fill="none" stroke="#3ec27b" stroke-width="1.7"/><rect x="1" y="5.8" width="11" height="7.4" fill="#3ec27b"/></svg>
<div class="t" style="left:323.5px;top:443.00px;font-size:13px;line-height:13px;color:#111;">Knor, a.s.</div>
<div class="t" style="right:462px;top:443.00px;font-size:13px;line-height:13px;color:#111;">3 267,00</div>
<div class="t" style="right:346px;top:443.00px;font-size:13px;line-height:13px;color:#111;">3 953,07</div>
<div style="left:855px;top:440px;width:17px;height:17px;background:#3ec27b;border:1px solid #4a8a66"></div>
<svg style="position:absolute;left:891px;top:441px;" width="11" height="15" viewBox="0 0 11 15"><rect x="0" y="0" width="11" height="15" rx="0.8" fill="#3ec27b"/><rect x="1.3" y="1.3" width="8.4" height="2.6" fill="#fcfcfc"/><rect x="1.1500000000000001" y="5.55" width="1.9" height="1.9" fill="#fcfcfc"/><rect x="4.55" y="5.55" width="1.9" height="1.9" fill="#fcfcfc"/><rect x="7.95" y="5.55" width="1.9" height="1.9" fill="#fcfcfc"/><rect x="1.1500000000000001" y="8.75" width="1.9" height="1.9" fill="#fcfcfc"/><rect x="4.55" y="8.75" width="1.9" height="1.9" fill="#fcfcfc"/><rect x="1.1500000000000001" y="12.05" width="1.9" height="1.9" fill="#fcfcfc"/><rect x="4.55" y="12.05" width="1.9" height="1.9" fill="#fcfcfc"/><rect x="7.95" y="8.75" width="1.9" height="5.2" fill="#fcfcfc"/></svg>
<div style="left:78px;top:481px;width:833px;height:1px;background:#d9d9d9"></div>
<svg style="position:absolute;left:85.6px;top:464px;" width="14" height="14" viewBox="0 0 14 14"><g stroke="#fca438" stroke-width="3.1"><path d="M7 0.3V13.7"/><path d="M1.2 3.65L12.8 10.35"/><path d="M1.2 10.35L12.8 3.65"/></g></svg>
<div class="t" style="left:112.8px;top:465.00px;font-size:13px;line-height:13px;color:#111;">10/2021/3</div>
<div class="t" style="left:203.5px;top:465.00px;font-size:13px;line-height:13px;color:#111;">10/2021/3</div>
<svg style="position:absolute;left:296px;top:464px;" width="13" height="14" viewBox="0 0 13 14"><path d="M3.3 6V4.4A3.2 3.2 0 0 1 9.7 4.4V6" fill="none" stroke="#3ec27b" stroke-width="1.7"/><rect x="1" y="5.8" width="11" height="7.4" fill="#3ec27b"/></svg>
<div class="t" style="left:323.5px;top:465.00px;font-size:13px;line-height:13px;color:#111;">Cukrárna PALEČEK</div>
<div class="t" style="right:462px;top:465.00px;font-size:13px;line-height:13px;color:#111;">4 988,00</div>
<div class="t" style="right:346px;top:465.00px;font-size:13px;line-height:13px;color:#111;">6 035,00</div>
<div style="left:855px;top:462px;width:17px;height:17px;background:#3ec27b;border:1px solid #4a8a66"></div>
<svg style="position:absolute;left:891px;top:463px;" width="11" height="15" viewBox="0 0 11 15"><rect x="0" y="0" width="11" height="15" rx="0.8" fill="#3ec27b"/><rect x="1.3" y="1.3" width="8.4" height="2.6" fill="#fcfcfc"/><rect x="1.1500000000000001" y="5.55" width="1.9" height="1.9" fill="#fcfcfc"/><rect x="4.55" y="5.55" width="1.9" height="1.9" fill="#fcfcfc"/><rect x="7.95" y="5.55" width="1.9" height="1.9" fill="#fcfcfc"/><rect x="1.1500000000000001" y="8.75" width="1.9" height="1.9" fill="#fcfcfc"/><rect x="4.55" y="8.75" width="1.9" height="1.9" fill="#fcfcfc"/><rect x="1.1500000000000001" y="12.05" width="1.9" height="1.9" fill="#fcfcfc"/><rect x="4.55" y="12.05" width="1.9" height="1.9" fill="#fcfcfc"/><rect x="7.95" y="8.75" width="1.9" height="5.2" fill="#fcfcfc"/></svg>
<div style="left:78px;top:503px;width:833px;height:1px;background:#d9d9d9"></div>
<svg style="position:absolute;left:85.6px;top:486px;" width="14" height="14" viewBox="0 0 14 14"><g stroke="#fca438" stroke-width="3.1"><path d="M7 0.3V13.7"/><path d="M1.2 3.65L12.8 10.35"/><path d="M1.2 10.35L12.8 3.65"/></g></svg>
<div class="t" style="left:112.8px;top:487.00px;font-size:13px;line-height:13px;color:#111;">10/2021/4</div>
<div class="t" style="left:203.5px;top:487.00px;font-size:13px;line-height:13px;color:#111;">10/2021/4</div>
<svg style="position:absolute;left:296px;top:486px;" width="13" height="14" viewBox="0 0 13 14"><path d="M3.3 6V4.4A3.2 3.2 0 0 1 9.7 4.4V6" fill="none" stroke="#3ec27b" stroke-width="1.7"/><rect x="1" y="5.8" width="11" height="7.4" fill="#3ec27b"/></svg>
<div class="t" style="left:323.5px;top:487.00px;font-size:13px;line-height:13px;color:#111;">Ed. Haas SK s.r.o.</div>
<div class="t" style="right:462px;top:487.00px;font-size:13px;line-height:13px;color:#111;">392,29</div>
<div class="t" style="right:346px;top:487.00px;font-size:13px;line-height:13px;color:#111;">392,29</div>
<div style="left:855px;top:484px;width:17px;height:17px;background:#fff;border:1px solid #7a7a7a"></div>
<div style="left:863px;top:485px;width:8px;height:15px;background:#3ec27b"></div>
<div style="left:856px;top:498px;width:7px;height:2px;background:#f25757"></div>
<svg style="position:absolute;left:891px;top:485px;" width="11" height="15" viewBox="0 0 11 15"><rect x="0" y="0" width="11" height="15" rx="0.8" fill="#3ec27b"/><rect x="1.3" y="1.3" width="8.4" height="2.6" fill="#fcfcfc"/><rect x="1.1500000000000001" y="5.55" width="1.9" height="1.9" fill="#fcfcfc"/><rect x="4.55" y="5.55" width="1.9" height="1.9" fill="#fcfcfc"/><rect x="7.95" y="5.55" width="1.9" height="1.9" fill="#fcfcfc"/><rect x="1.1500000000000001" y="8.75" width="1.9" height="1.9" fill="#fcfcfc"/><rect x="4.55" y="8.75" width="1.9" height="1.9" fill="#fcfcfc"/><rect x="1.1500000000000001" y="12.05" width="1.9" height="1.9" fill="#fcfcfc"/><rect x="4.55" y="12.05" width="1.9" height="1.9" fill="#fcfcfc"/><rect x="7.95" y="8.75" width="1.9" height="5.2" fill="#fcfcfc"/></svg>
<div style="left:78px;top:525px;width:833px;height:1px;background:#d9d9d9"></div>
<svg style="position:absolute;left:85.6px;top:508px;" width="14" height="14" viewBox="0 0 14 14"><g stroke="#fca438" stroke-width="3.1"><path d="M7 0.3V13.7"/><path d="M1.2 3.65L12.8 10.35"/><path d="M1.2 10.35L12.8 3.65"/></g></svg>
<div class="t" style="left:112.8px;top:509.00px;font-size:13px;line-height:13px;color:#111;">10/2021/5</div>
<div class="t" style="left:203.5px;top:509.00px;font-size:13px;line-height:13px;color:#111;">10/2021/5</div>
<svg style="position:absolute;left:296px;top:508px;" width="13" height="14" viewBox="0 0 13 14"><path d="M3.3 6V4.4A3.2 3.2 0 0 1 9.7 4.4V6" fill="none" stroke="#3ec27b" stroke-width="1.7"/><rect x="1" y="5.8" width="11" height="7.4" fill="#3ec27b"/></svg>
<div class="t" style="left:323.5px;top:509.00px;font-size:13px;line-height:13px;color:#111;">Léčiva, a.s.</div>
<div class="t" style="right:462px;top:509.00px;font-size:13px;line-height:13px;color:#111;">338,00</div>
<div class="t" style="right:346px;top:509.00px;font-size:13px;line-height:13px;color:#111;">408,98</div>
<div style="left:855px;top:506px;width:17px;height:17px;background:#f25757;border:1px solid #8a4a4a"></div>
<svg style="position:absolute;left:891px;top:507px;" width="11" height="15" viewBox="0 0 11 15"><rect x="0" y="0" width="11" height="15" rx="0.8" fill="#3ec27b"/><rect x="1.3" y="1.3" width="8.4" height="2.6" fill="#fcfcfc"/><rect x="1.1500000000000001" y="5.55" width="1.9" height="1.9" fill="#fcfcfc"/><rect x="4.55" y="5.55" width="1.9" height="1.9" fill="#fcfcfc"/><rect x="7.95" y="5.55" width="1.9" height="1.9" fill="#fcfcfc"/><rect x="1.1500000000000001" y="8.75" width="1.9" height="1.9" fill="#fcfcfc"/><rect x="4.55" y="8.75" width="1.9" height="1.9" fill="#fcfcfc"/><rect x="1.1500000000000001" y="12.05" width="1.9" height="1.9" fill="#fcfcfc"/><rect x="4.55" y="12.05" width="1.9" height="1.9" fill="#fcfcfc"/><rect x="7.95" y="8.75" width="1.9" height="5.2" fill="#fcfcfc"/></svg>
<div style="left:79px;top:526px;width:832px;height:21px;background:#e0e0e0"></div>
<div style="left:78px;top:547px;width:833px;height:1px;background:#d9d9d9"></div>
<div class="t" style="left:112.8px;top:531.00px;font-size:13px;line-height:13px;color:#111;">10/2021/6</div>
<div class="t" style="left:203.5px;top:531.00px;font-size:13px;line-height:13px;color:#111;">10/2021/6</div>
<svg style="position:absolute;left:296px;top:530px;" width="13" height="14" viewBox="0 0 13 14"><path d="M3.3 6V4.4A3.2 3.2 0 0 1 9.7 4.4V6" fill="none" stroke="#3ec27b" stroke-width="1.7"/><rect x="1" y="5.8" width="11" height="7.4" fill="#3ec27b"/></svg>
<div class="t" style="left:323.5px;top:531.00px;font-size:13px;line-height:13px;color:#111;">Lagant Galway Co</div>
<div class="t" style="right:462px;top:531.00px;font-size:13px;line-height:13px;color:#111;">60,66</div>
<div class="t" style="right:346px;top:531.00px;font-size:13px;line-height:13px;color:#111;">60,66</div>
<div style="left:855px;top:528px;width:17px;height:17px;background:#e0e0e0;border:1px solid #7a7a7a"></div>
<div style="left:863px;top:529px;width:8px;height:15px;background:#3ec27b"></div>
<div style="left:856px;top:542px;width:7px;height:2px;background:#f25757"></div>
<svg style="position:absolute;left:891px;top:529px;" width="11" height="15" viewBox="0 0 11 15"><rect x="0" y="0" width="11" height="15" rx="0.8" fill="#3ec27b"/><rect x="1.3" y="1.3" width="8.4" height="2.6" fill="#e0e0e0"/><rect x="1.1500000000000001" y="5.55" width="1.9" height="1.9" fill="#e0e0e0"/><rect x="4.55" y="5.55" width="1.9" height="1.9" fill="#e0e0e0"/><rect x="7.95" y="5.55" width="1.9" height="1.9" fill="#e0e0e0"/><rect x="1.1500000000000001" y="8.75" width="1.9" height="1.9" fill="#e0e0e0"/><rect x="4.55" y="8.75" width="1.9" height="1.9" fill="#e0e0e0"/><rect x="1.1500000000000001" y="12.05" width="1.9" height="1.9" fill="#e0e0e0"/><rect x="4.55" y="12.05" width="1.9" height="1.9" fill="#e0e0e0"/><rect x="7.95" y="8.75" width="1.9" height="5.2" fill="#e0e0e0"/></svg>
<div style="left:78px;top:569px;width:833px;height:1px;background:#d9d9d9"></div>
<div class="t" style="left:112.8px;top:553.00px;font-size:13px;line-height:13px;color:#111;">10/2021/7</div>
<div class="t" style="left:203.5px;top:553.00px;font-size:13px;line-height:13px;color:#111;">10/2021/7</div>
<svg style="position:absolute;left:296px;top:552px;" width="13" height="14" viewBox="0 0 13 14"><path d="M3.3 6V4.4A3.2 3.2 0 0 1 9.7 4.4V6" fill="none" stroke="#3ec27b" stroke-width="1.7"/><rect x="1" y="5.8" width="11" height="7.4" fill="#3ec27b"/></svg>
<div class="t" style="left:323.5px;top:553.00px;font-size:13px;line-height:13px;color:#111;">Baldwin Store</div>
<div class="t" style="right:462px;top:553.00px;font-size:13px;line-height:13px;color:#111;">72,64</div>
<div class="t" style="right:346px;top:553.00px;font-size:13px;line-height:13px;color:#111;">72,64</div>
<div style="left:855px;top:550px;width:17px;height:17px;background:#3ec27b;border:1px solid #4a8a66"></div>
<svg style="position:absolute;left:891px;top:551px;" width="11" height="15" viewBox="0 0 11 15"><rect x="0" y="0" width="11" height="15" rx="0.8" fill="#3ec27b"/><rect x="1.3" y="1.3" width="8.4" height="2.6" fill="#fcfcfc"/><rect x="1.1500000000000001" y="5.55" width="1.9" height="1.9" fill="#fcfcfc"/><rect x="4.55" y="5.55" width="1.9" height="1.9" fill="#fcfcfc"/><rect x="7.95" y="5.55" width="1.9" height="1.9" fill="#fcfcfc"/><rect x="1.1500000000000001" y="8.75" width="1.9" height="1.9" fill="#fcfcfc"/><rect x="4.55" y="8.75" width="1.9" height="1.9" fill="#fcfcfc"/><rect x="1.1500000000000001" y="12.05" width="1.9" height="1.9" fill="#fcfcfc"/><rect x="4.55" y="12.05" width="1.9" height="1.9" fill="#fcfcfc"/><rect x="7.95" y="8.75" width="1.9" height="5.2" fill="#fcfcfc"/></svg>
<div style="left:78px;top:591px;width:833px;height:1px;background:#d9d9d9"></div>
<div class="t" style="left:112.8px;top:575.00px;font-size:13px;line-height:13px;color:#111;">10/2021/8</div>
<div class="t" style="left:203.5px;top:575.00px;font-size:13px;line-height:13px;color:#111;">10/2021/8</div>
<svg style="position:absolute;left:296px;top:574px;" width="13" height="14" viewBox="0 0 13 14"><path d="M3.3 6V4.4A3.2 3.2 0 0 1 9.7 4.4V6" fill="none" stroke="#3ec27b" stroke-width="1.7"/><rect x="1" y="5.8" width="11" height="7.4" fill="#3ec27b"/></svg>
<div class="t" style="left:323.5px;top:575.00px;font-size:13px;line-height:13px;color:#111;">Vitana, a.s.</div>
<div style="left:855px;top:572px;width:17px;height:17px;background:#3ec27b;border:1px solid #4a8a66"></div>
<svg style="position:absolute;left:891px;top:573px;" width="11" height="15" viewBox="0 0 11 15"><rect x="0" y="0" width="11" height="15" rx="0.8" fill="#3ec27b"/><rect x="1.3" y="1.3" width="8.4" height="2.6" fill="#fcfcfc"/><rect x="1.1500000000000001" y="5.55" width="1.9" height="1.9" fill="#fcfcfc"/><rect x="4.55" y="5.55" width="1.9" height="1.9" fill="#fcfcfc"/><rect x="7.95" y="5.55" width="1.9" height="1.9" fill="#fcfcfc"/><rect x="1.1500000000000001" y="8.75" width="1.9" height="1.9" fill="#fcfcfc"/><rect x="4.55" y="8.75" width="1.9" height="1.9" fill="#fcfcfc"/><rect x="1.1500000000000001" y="12.05" width="1.9" height="1.9" fill="#fcfcfc"/><rect x="4.55" y="12.05" width="1.9" height="1.9" fill="#fcfcfc"/><rect x="7.95" y="8.75" width="1.9" height="5.2" fill="#fcfcfc"/></svg>
<div style="left:78px;top:613px;width:833px;height:1px;background:#d9d9d9"></div>
<div class="t" style="left:112.8px;top:597.00px;font-size:13px;line-height:13px;color:#111;">10/2021/9</div>
<div class="t" style="left:203.5px;top:597.00px;font-size:13px;line-height:13px;color:#111;">10/2021/9</div>
<svg style="position:absolute;left:296px;top:596px;" width="13" height="14" viewBox="0 0 13 14"><path d="M3.3 6V4.4A3.2 3.2 0 0 1 9.7 4.4V6" fill="none" stroke="#3ec27b" stroke-width="1.7"/><rect x="1" y="5.8" width="11" height="7.4" fill="#3ec27b"/></svg>
<div class="t" style="left:323.5px;top:597.00px;font-size:13px;line-height:13px;color:#111;">AB Group</div>
<div style="left:855px;top:594px;width:17px;height:17px;background:#3ec27b;border:1px solid #4a8a66"></div>
<svg style="position:absolute;left:891px;top:595px;" width="11" height="15" viewBox="0 0 11 15"><rect x="0" y="0" width="11" height="15" rx="0.8" fill="#3ec27b"/><rect x="1.3" y="1.3" width="8.4" height="2.6" fill="#fcfcfc"/><rect x="1.1500000000000001" y="5.55" width="1.9" height="1.9" fill="#fcfcfc"/><rect x="4.55" y="5.55" width="1.9" height="1.9" fill="#fcfcfc"/><rect x="7.95" y="5.55" width="1.9" height="1.9" fill="#fcfcfc"/><rect x="1.1500000000000001" y="8.75" width="1.9" height="1.9" fill="#fcfcfc"/><rect x="4.55" y="8.75" width="1.9" height="1.9" fill="#fcfcfc"/><rect x="1.1500000000000001" y="12.05" width="1.9" height="1.9" fill="#fcfcfc"/><rect x="4.55" y="12.05" width="1.9" height="1.9" fill="#fcfcfc"/><rect x="7.95" y="8.75" width="1.9" height="5.2" fill="#fcfcfc"/></svg>
<div style="left:78px;top:635px;width:833px;height:1px;background:#d9d9d9"></div>
<svg style="position:absolute;left:85.6px;top:618px;" width="14" height="14" viewBox="0 0 14 14"><g stroke="#fca438" stroke-width="3.1"><path d="M7 0.3V13.7"/><path d="M1.2 3.65L12.8 10.35"/><path d="M1.2 10.35L12.8 3.65"/></g></svg>
<div class="t" style="left:112.8px;top:619.00px;font-size:13px;line-height:13px;color:#111;">10/2021/10</div>
<div class="t" style="left:203.5px;top:619.00px;font-size:13px;line-height:13px;color:#111;">10/2021/10</div>
<svg style="position:absolute;left:296px;top:618px;" width="13" height="14" viewBox="0 0 13 14"><path d="M3.3 6V4.4A3.2 3.2 0 0 1 9.7 4.4V6" fill="none" stroke="#3ec27b" stroke-width="1.7"/><rect x="1" y="5.8" width="11" height="7.4" fill="#3ec27b"/></svg>
<div class="t" style="left:323.5px;top:619.00px;font-size:13px;line-height:13px;color:#111;">Vitana, a.s.</div>
<div style="left:855px;top:616px;width:17px;height:17px;background:#3ec27b;border:1px solid #4a8a66"></div>
<svg style="position:absolute;left:891px;top:617px;" width="11" height="15" viewBox="0 0 11 15"><rect x="0" y="0" width="11" height="15" rx="0.8" fill="#3ec27b"/><rect x="1.3" y="1.3" width="8.4" height="2.6" fill="#fcfcfc"/><rect x="1.1500000000000001" y="5.55" width="1.9" height="1.9" fill="#fcfcfc"/><rect x="4.55" y="5.55" width="1.9" height="1.9" fill="#fcfcfc"/><rect x="7.95" y="5.55" width="1.9" height="1.9" fill="#fcfcfc"/><rect x="1.1500000000000001" y="8.75" width="1.9" height="1.9" fill="#fcfcfc"/><rect x="4.55" y="8.75" width="1.9" height="1.9" fill="#fcfcfc"/><rect x="1.1500000000000001" y="12.05" width="1.9" height="1.9" fill="#fcfcfc"/><rect x="4.55" y="12.05" width="1.9" height="1.9" fill="#fcfcfc"/><rect x="7.95" y="8.75" width="1.9" height="5.2" fill="#fcfcfc"/></svg>
<div style="left:78px;top:657px;width:833px;height:1px;background:#d9d9d9"></div>
<div class="t" style="left:112.8px;top:641.00px;font-size:13px;line-height:13px;color:#111;">10/2021/11</div>
<div class="t" style="left:203.5px;top:641.00px;font-size:13px;line-height:13px;color:#111;">10/2021/11</div>
<svg style="position:absolute;left:296px;top:640px;" width="13" height="14" viewBox="0 0 13 14"><path d="M3.3 6V4.4A3.2 3.2 0 0 1 9.7 4.4V6" fill="none" stroke="#3ec27b" stroke-width="1.7"/><rect x="1" y="5.8" width="11" height="7.4" fill="#3ec27b"/></svg>
<div class="t" style="left:323.5px;top:641.00px;font-size:13px;line-height:13px;color:#111;">Čokoládovny a.s.</div>
<div style="left:855px;top:638px;width:17px;height:17px;background:#3ec27b;border:1px solid #4a8a66"></div>
<svg style="position:absolute;left:891px;top:639px;" width="11" height="15" viewBox="0 0 11 15"><rect x="0" y="0" width="11" height="15" rx="0.8" fill="#3ec27b"/><rect x="1.3" y="1.3" width="8.4" height="2.6" fill="#fcfcfc"/><rect x="1.1500000000000001" y="5.55" width="1.9" height="1.9" fill="#fcfcfc"/><rect x="4.55" y="5.55" width="1.9" height="1.9" fill="#fcfcfc"/><rect x="7.95" y="5.55" width="1.9" height="1.9" fill="#fcfcfc"/><rect x="1.1500000000000001" y="8.75" width="1.9" height="1.9" fill="#fcfcfc"/><rect x="4.55" y="8.75" width="1.9" height="1.9" fill="#fcfcfc"/><rect x="1.1500000000000001" y="12.05" width="1.9" height="1.9" fill="#fcfcfc"/><rect x="4.55" y="12.05" width="1.9" height="1.9" fill="#fcfcfc"/><rect x="7.95" y="8.75" width="1.9" height="5.2" fill="#fcfcfc"/></svg>
<div style="left:78px;top:679px;width:833px;height:1px;background:#d9d9d9"></div>
<div class="t" style="left:112.8px;top:663.00px;font-size:13px;line-height:13px;color:#111;">10/2021/12</div>
<div class="t" style="left:203.5px;top:663.00px;font-size:13px;line-height:13px;color:#111;">10/2021/12</div>
<svg style="position:absolute;left:296px;top:662px;" width="13" height="14" viewBox="0 0 13 14"><path d="M3.3 6V4.4A3.2 3.2 0 0 1 9.7 4.4V6" fill="none" stroke="#3ec27b" stroke-width="1.7"/><rect x="1" y="5.8" width="11" height="7.4" fill="#3ec27b"/></svg>
<div class="t" style="left:323.5px;top:663.00px;font-size:13px;line-height:13px;color:#111;">Vitana, a.s.</div>
<div style="left:855px;top:660px;width:17px;height:17px;background:#3ec27b;border:1px solid #4a8a66"></div>
<svg style="position:absolute;left:891px;top:661px;" width="11" height="15" viewBox="0 0 11 15"><rect x="0" y="0" width="11" height="15" rx="0.8" fill="#3ec27b"/><rect x="1.3" y="1.3" width="8.4" height="2.6" fill="#fcfcfc"/><rect x="1.1500000000000001" y="5.55" width="1.9" height="1.9" fill="#fcfcfc"/><rect x="4.55" y="5.55" width="1.9" height="1.9" fill="#fcfcfc"/><rect x="7.95" y="5.55" width="1.9" height="1.9" fill="#fcfcfc"/><rect x="1.1500000000000001" y="8.75" width="1.9" height="1.9" fill="#fcfcfc"/><rect x="4.55" y="8.75" width="1.9" height="1.9" fill="#fcfcfc"/><rect x="1.1500000000000001" y="12.05" width="1.9" height="1.9" fill="#fcfcfc"/><rect x="4.55" y="12.05" width="1.9" height="1.9" fill="#fcfcfc"/><rect x="7.95" y="8.75" width="1.9" height="5.2" fill="#fcfcfc"/></svg>
<div style="left:78px;top:701px;width:833px;height:1px;background:#d9d9d9"></div>
<svg style="position:absolute;left:85.6px;top:684px;" width="14" height="14" viewBox="0 0 14 14"><g stroke="#fca438" stroke-width="3.1"><path d="M7 0.3V13.7"/><path d="M1.2 3.65L12.8 10.35"/><path d="M1.2 10.35L12.8 3.65"/></g></svg>
<div class="t" style="left:112.8px;top:685.00px;font-size:13px;line-height:13px;color:#111;">10/2021/13</div>
<div class="t" style="left:203.5px;top:685.00px;font-size:13px;line-height:13px;color:#111;">10/2021/13</div>
<svg style="position:absolute;left:296px;top:684px;" width="13" height="14" viewBox="0 0 13 14"><path d="M3.3 6V4.4A3.2 3.2 0 0 1 9.7 4.4V6" fill="none" stroke="#3ec27b" stroke-width="1.7"/><rect x="1" y="5.8" width="11" height="7.4" fill="#3ec27b"/></svg>
<div class="t" style="left:323.5px;top:685.00px;font-size:13px;line-height:13px;color:#111;">Gouda Kaas</div>
<div style="left:855px;top:682px;width:17px;height:17px;background:#3ec27b;border:1px solid #4a8a66"></div>
<svg style="position:absolute;left:891px;top:683px;" width="11" height="15" viewBox="0 0 11 15"><rect x="0" y="0" width="11" height="15" rx="0.8" fill="#3ec27b"/><rect x="1.3" y="1.3" width="8.4" height="2.6" fill="#fcfcfc"/><rect x="1.1500000000000001" y="5.55" width="1.9" height="1.9" fill="#fcfcfc"/><rect x="4.55" y="5.55" width="1.9" height="1.9" fill="#fcfcfc"/><rect x="7.95" y="5.55" width="1.9" height="1.9" fill="#fcfcfc"/><rect x="1.1500000000000001" y="8.75" width="1.9" height="1.9" fill="#fcfcfc"/><rect x="4.55" y="8.75" width="1.9" height="1.9" fill="#fcfcfc"/><rect x="1.1500000000000001" y="12.05" width="1.9" height="1.9" fill="#fcfcfc"/><rect x="4.55" y="12.05" width="1.9" height="1.9" fill="#fcfcfc"/><rect x="7.95" y="8.75" width="1.9" height="5.2" fill="#fcfcfc"/></svg>
<div style="left:106px;top:196px;width:1px;height:505px;background:#d9d9d9"></div>
<div style="left:197px;top:196px;width:1px;height:505px;background:#d9d9d9"></div>
<div style="left:288px;top:196px;width:1px;height:505px;background:#d9d9d9"></div>
<div style="left:317px;top:196px;width:1px;height:505px;background:#d9d9d9"></div>
<div style="left:493px;top:196px;width:1px;height:505px;background:#d9d9d9"></div>
<div style="left:613px;top:196px;width:1px;height:505px;background:#d9d9d9"></div>
<div style="left:729px;top:196px;width:1px;height:505px;background:#d9d9d9"></div>
<div style="left:845px;top:196px;width:1px;height:505px;background:#d9d9d9"></div>
<div style="left:882px;top:196px;width:1px;height:505px;background:#d9d9d9"></div>
<div style="left:910px;top:196px;width:1px;height:505px;background:#d9d9d9"></div>
<div style="left:911px;top:196px;width:20px;height:528px;background:#f0f0f0;border-left:1px solid #e6e6e6;border-right:1px solid #d2d2d2"></div>
<div style="left:912px;top:196px;width:2px;height:17px;background:#fff"></div>
<svg style="position:absolute;left:914px;top:199px;" width="14" height="10" viewBox="0 0 14 10"><path d="M4.8 8.2L7.8 4.6L10.8 8.2" fill="none" stroke="#505050" stroke-width="2.2"/></svg>
<div style="left:914px;top:451px;width:15px;height:17px;background:#cdcdcd"></div>
<div style="left:78px;top:724px;width:853px;height:26px;background:#f0f0f0;border:1px solid #d2d2d2"></div>
<div style="left:79px;top:725px;width:23px;height:23px;background:#d3d3d3;border:2px solid #7d7d7d"></div>
<svg style="position:absolute;left:82px;top:729px;" width="17" height="16" viewBox="0 0 17 16"><path d="M1.2 2.2Q4.6 0.8 8 2.6Q11.4 0.8 14.8 2.2V13.2Q11.4 12 8 13.8Q4.6 12 1.2 13.2Z" fill="#d3d3d3" stroke="#1656ab" stroke-width="1.3"/><path d="M8 2.6V13.8" stroke="#1656ab" stroke-width="1.2"/></svg>
<svg style="position:absolute;left:107px;top:729px;" width="15" height="15" viewBox="0 0 15 15"><path d="M2 1.6H13L14.2 4.8H0.8Z" fill="#c6d6ea" stroke="#1656ab" stroke-width="1.2"/><path d="M1.4 4.8V13.6H13.6V4.8" fill="none" stroke="#1656ab" stroke-width="1.3"/><rect x="5.5" y="6.8" width="4" height="1.2" fill="#1656ab"/></svg>
<svg style="position:absolute;left:131px;top:728px;" width="19" height="20" viewBox="0 0 19 20"><path d="M1.8 1.8H14L9.2 8.5V15.5L7 14V8.5Z" fill="none" stroke="#1656ab" stroke-width="1.3" stroke-linejoin="round"/><path d="M11.5 15.5H17L14.25 18.2Z" fill="#1656ab"/></svg>
<div style="left:151px;top:726px;width:1px;height:21px;background:#d0d0d0"></div>
<svg style="position:absolute;left:156px;top:728px;" width="16" height="16" viewBox="0 0 16 16"><path d="M6.45 0.50L9.55 0.50L9.55 5.32L13.72 2.91L15.27 5.59L11.10 8.00L15.27 10.41L13.72 13.09L9.55 10.68L9.55 15.50L6.45 15.50L6.45 10.68L2.28 13.09L0.73 10.41L4.90 8.00L0.73 5.59L2.28 2.91L6.45 5.32Z" fill="none" stroke="#1656ab" stroke-width="1.3" stroke-linejoin="miter"/></svg>
<div class="t" style="left:181.3px;top:731.00px;font-size:12px;line-height:12px;color:#1f4fa0;">8</div>
<div style="left:194px;top:726px;width:1px;height:21px;background:#d0d0d0"></div>
<div class="t" style="left:201.3px;top:731.00px;font-size:12px;line-height:12px;color:#1f4fa0;">Počet záznamů</div>
<div style="left:288px;top:726px;width:1px;height:21px;background:#d0d0d0"></div>
<svg style="position:absolute;left:884px;top:729px;" width="15" height="16" viewBox="0 0 15 16"><path d="M13.5 2H2.2L8 8.2L2.2 14.5H13.5" fill="none" stroke="#1656ab" stroke-width="1.3"/></svg>
<div style="left:904px;top:726px;width:1px;height:21px;background:#d0d0d0"></div>
<div style="left:878px;top:726px;width:1px;height:21px;background:#d0d0d0"></div>
<svg style="position:absolute;left:909px;top:728px;" width="17" height="17" viewBox="0 0 17 17"><path d="M1.6 15.4L2.6 11.4L11.2 2.8A2.1 2.1 0 0 1 14.2 5.8L5.6 14.4Z" fill="none" stroke="#1656ab" stroke-width="1.3" stroke-linejoin="round"/><path d="M10 4L13 7" stroke="#1656ab" stroke-width="1.1"/><path d="M1.3 15.7L2 13L4 15Z" fill="#1656ab"/><rect x="8" y="14.2" width="7.5" height="1.4" fill="#1656ab"/></svg>
<div style="left:941px;top:34px;width:7px;height:723px;background:#00aeef"></div>
<div style="left:943px;top:383.5px;width:3px;height:3px;border-radius:50%;background:#7fd6f7"></div>
<div style="left:943px;top:392.5px;width:3px;height:3px;border-radius:50%;background:#7fd6f7"></div>
<div style="left:943px;top:401.5px;width:3px;height:3px;border-radius:50%;background:#7fd6f7"></div>
<div style="left:951px;top:34px;width:231px;height:723px;background:#0054a6"></div>
<div class="t" style="left:958.4px;top:49.00px;font-size:19.8px;line-height:19.8px;color:#fff;">Faktura 10/2021/6</div>
<svg style="position:absolute;left:1159px;top:47px;" width="15" height="15" viewBox="0 0 15 15"><path d="M6 2.5H2V13H12.5V9" fill="none" stroke="#fff" stroke-width="1.5"/><path d="M8 1.5H13.5V7M13.5 1.5L6.5 8.5" fill="none" stroke="#fff" stroke-width="1.5"/></svg>
<div style="left:954px;top:76px;width:225px;height:599px;background:#fafafa"></div>
<div style="left:954px;top:76px;width:208px;height:25px;background:#00aeef"></div>
<div class="t" style="left:958.5px;top:83.00px;font-size:13px;line-height:13px;color:#fff;font-weight:bold;">Základní údaje</div>
<div style="left:1137px;top:79px;width:1px;height:19px;background:#1a96cc"></div>
<svg style="position:absolute;left:1142px;top:84px;" width="15" height="10" viewBox="0 0 15 10"><path d="M1 8L7.5 2L14 8" fill="none" stroke="#fff" stroke-width="1.3"/></svg>
<div style="left:954px;top:101px;width:208px;height:278px;background:#fafafa"></div>
<div style="left:954px;top:379px;width:208px;height:6px;background:#0054a6"></div>
<div style="left:954px;top:385px;width:208px;height:25px;background:#00aeef"></div>
<div class="t" style="left:958.5px;top:392.00px;font-size:13px;line-height:13px;color:#fff;font-weight:bold;">Zálohy k zakázce</div>
<div style="left:1137px;top:388px;width:1px;height:19px;background:#1a96cc"></div>
<svg style="position:absolute;left:1142px;top:393px;" width="15" height="10" viewBox="0 0 15 10"><path d="M1 8L7.5 2L14 8" fill="none" stroke="#fff" stroke-width="1.3"/></svg>
<div style="left:954px;top:410px;width:208px;height:80px;background:#fafafa"></div>
<div style="left:954px;top:490px;width:208px;height:6px;background:#0054a6"></div>
<div style="left:954px;top:496px;width:208px;height:25px;background:#00aeef"></div>
<div class="t" style="left:958.5px;top:503.00px;font-size:13px;line-height:13px;color:#fff;font-weight:bold;">Zálohy k odběrateli</div>
<div style="left:1137px;top:499px;width:1px;height:19px;background:#1a96cc"></div>
<svg style="position:absolute;left:1142px;top:504px;" width="15" height="10" viewBox="0 0 15 10"><path d="M1 8L7.5 2L14 8" fill="none" stroke="#fff" stroke-width="1.3"/></svg>
<div style="left:954px;top:521px;width:208px;height:80px;background:#fafafa"></div>
<div style="left:954px;top:601px;width:208px;height:6px;background:#0054a6"></div>
<div style="left:954px;top:607px;width:208px;height:25px;background:#00aeef"></div>
<div class="t" style="left:958.5px;top:614.00px;font-size:13px;line-height:13px;color:#fff;font-weight:bold;">Obchodní informace</div>
<div style="left:1137px;top:610px;width:1px;height:19px;background:#1a96cc"></div>
<svg style="position:absolute;left:1142px;top:615px;" width="15" height="10" viewBox="0 0 15 10"><path d="M1 8L7.5 2L14 8" fill="none" stroke="#fff" stroke-width="1.3"/></svg>
<div style="left:954px;top:632px;width:208px;height:70px;background:#fafafa"></div>
<div class="t" style="left:961.5px;top:109.00px;font-size:12px;line-height:12px;color:#1f4fa0;">Zakázka:</div>
<div class="t" style="right:32px;top:109.00px;font-size:12px;line-height:12px;color:#111;letter-spacing:-0.3px">10/2021/6</div>
<div style="left:961px;top:122px;width:194px;height:1px;background:#e2e2e2"></div>
<div class="t" style="left:961.5px;top:131.00px;font-size:12px;line-height:12px;color:#1f4fa0;">:</div>
<div style="left:961px;top:144px;width:194px;height:1px;background:#e2e2e2"></div>
<div class="t" style="left:973px;top:131.00px;font-size:12px;line-height:12px;color:#b0b0b0;letter-spacing:-0.17px">[TradingPartnerId.AddressAndNa...</div>
<div class="t" style="left:961.5px;top:153.00px;font-size:12px;line-height:12px;color:#1f4fa0;">Popis:</div>
<div style="left:961px;top:166px;width:194px;height:1px;background:#e2e2e2"></div>
<div class="t" style="left:961.5px;top:175.00px;font-size:12px;line-height:12px;color:#1f4fa0;">Netto:</div>
<div class="t" style="right:32px;top:175.00px;font-size:12px;line-height:12px;color:#1f4fa0;letter-spacing:-1.5px">GBP</div>
<div class="t" style="right:56px;top:175.00px;font-size:12px;line-height:12px;color:#111;letter-spacing:-0.6px">60,66</div>
<div style="left:961px;top:188px;width:194px;height:1px;background:#e2e2e2"></div>
<div class="t" style="left:961.5px;top:197.00px;font-size:12px;line-height:12px;color:#1f4fa0;">DPH:</div>
<div class="t" style="right:32px;top:197.00px;font-size:12px;line-height:12px;color:#1f4fa0;letter-spacing:-1.5px">GBP</div>
<div class="t" style="right:56px;top:197.00px;font-size:12px;line-height:12px;color:#111;letter-spacing:-0.6px">0,00</div>
<div style="left:961px;top:210px;width:194px;height:1px;background:#e2e2e2"></div>
<div class="t" style="left:961.5px;top:219.00px;font-size:12px;line-height:12px;color:#1f4fa0;font-weight:bold;">Brutto:</div>
<div class="t" style="right:32px;top:219.00px;font-size:12px;line-height:12px;color:#1f4fa0;font-weight:bold;letter-spacing:-1px">GBP</div>
<div class="t" style="right:59px;top:219.00px;font-size:12px;line-height:12px;color:#111;font-weight:bold;">60,66</div>
<div style="left:961px;top:232px;width:194px;height:1px;background:#e2e2e2"></div>
<div class="t" style="left:961.5px;top:241.00px;font-size:12px;line-height:12px;color:#1f4fa0;">Datum účetního případu:</div>
<div class="t" style="right:32px;top:241.00px;font-size:12px;line-height:12px;color:#111;letter-spacing:-0.8px">02.02.2021</div>
<div style="left:961px;top:254px;width:194px;height:1px;background:#e2e2e2"></div>
<div class="t" style="left:961.5px;top:263.00px;font-size:12px;line-height:12px;color:#1f4fa0;">Datum UZP:</div>
<div class="t" style="right:32px;top:263.00px;font-size:12px;line-height:12px;color:#111;letter-spacing:-0.8px">02.02.2021</div>
<div style="left:961px;top:276px;width:194px;height:1px;background:#e2e2e2"></div>
<div class="t" style="left:961.5px;top:285.00px;font-size:12px;line-height:12px;color:#1f4fa0;">Datum splatnosti:</div>
<div class="t" style="right:32px;top:285.00px;font-size:12px;line-height:12px;color:#111;letter-spacing:-0.8px">16.02.2021</div>
<div style="left:961px;top:298px;width:194px;height:1px;background:#e2e2e2"></div>
<div class="t" style="left:961.5px;top:307.00px;font-size:12px;line-height:12px;color:#1f4fa0;">Datum zaplacení:</div>
<div class="t" style="right:32px;top:307.00px;font-size:12px;line-height:12px;color:#111;letter-spacing:-0.8px">00.00.0000</div>
<div style="left:961px;top:320px;width:194px;height:1px;background:#e2e2e2"></div>
<div class="t" style="left:961.5px;top:329.00px;font-size:12px;line-height:12px;color:#1f4fa0;">Zbývá zaplatit:</div>
<div class="t" style="right:32px;top:329.00px;font-size:12px;line-height:12px;color:#1f4fa0;letter-spacing:-1.5px">GBP</div>
<div class="t" style="right:56px;top:329.00px;font-size:12px;line-height:12px;color:#111;letter-spacing:-0.6px">5,86</div>
<div style="left:961px;top:342px;width:194px;height:1px;background:#e2e2e2"></div>
<div style="left:1080px;top:349px;width:23px;height:23px;background:#fff;border:1px solid #7a7a7a"></div>
<div style="left:1091px;top:351px;width:11px;height:20px;background:#3ec27b"></div>
<div style="left:1081px;top:369px;width:10px;height:2px;background:#f25757"></div>
<svg style="position:absolute;left:1110px;top:351px;" width="16" height="19" viewBox="0 0 16 19"><path d="M3.1 9V5.4A4.4 4.4 0 0 1 11.9 5.4V9" fill="none" stroke="#3ec27b" stroke-width="1.7"/><rect x="0" y="8.2" width="15" height="9.8" fill="#3ec27b"/></svg>
<div class="t" style="left:961.5px;top:420.00px;font-size:12px;line-height:12px;color:#1f4fa0;">Čerpáno</div>
<div class="t" style="right:32px;top:420.00px;font-size:12px;line-height:12px;color:#1f4fa0;letter-spacing:-1.5px">GBP</div>
<div class="t" style="right:56px;top:420.00px;font-size:12px;line-height:12px;color:#111;letter-spacing:-0.6px">0,00</div>
<div style="left:961px;top:433px;width:194px;height:1px;background:#e2e2e2"></div>
<div class="t" style="left:961.5px;top:442.00px;font-size:12px;line-height:12px;color:#1f4fa0;font-weight:bold;">Dočerpat</div>
<div class="t" style="right:32px;top:442.00px;font-size:12px;line-height:12px;color:#1f4fa0;font-weight:bold;letter-spacing:-1px">GBP</div>
<div class="t" style="right:59px;top:442.00px;font-size:12px;line-height:12px;color:#111;font-weight:bold;">0,00</div>
<div style="left:961px;top:455px;width:194px;height:1px;background:#e2e2e2"></div>
<div class="t" style="left:961.5px;top:531.00px;font-size:12px;line-height:12px;color:#1f4fa0;">Čerpáno</div>
<div class="t" style="right:32px;top:531.00px;font-size:12px;line-height:12px;color:#1f4fa0;letter-spacing:-1.5px">GBP</div>
<div class="t" style="right:56px;top:531.00px;font-size:12px;line-height:12px;color:#111;letter-spacing:-0.6px">0,00</div>
<div style="left:961px;top:544px;width:194px;height:1px;background:#e2e2e2"></div>
<div class="t" style="left:961.5px;top:553.00px;font-size:12px;line-height:12px;color:#1f4fa0;font-weight:bold;">Dočerpat</div>
<div class="t" style="right:32px;top:553.00px;font-size:12px;line-height:12px;color:#1f4fa0;font-weight:bold;letter-spacing:-1px">GBP</div>
<div class="t" style="right:59px;top:553.00px;font-size:12px;line-height:12px;color:#111;font-weight:bold;">0,00</div>
<div style="left:961px;top:566px;width:194px;height:1px;background:#e2e2e2"></div>
<div class="t" style="left:965.2px;top:644.00px;font-size:13px;line-height:13px;color:#1f4fa0;font-weight:bold;">Skutečnost</div>
<div style="left:961px;top:661px;width:194px;height:2px;background:#00aeef"></div>
<div class="t" style="left:961.5px;top:672.00px;font-size:12px;line-height:12px;color:#1f4fa0;">Zisk</div>
<div class="t" style="right:32px;top:672.00px;font-size:12px;line-height:12px;color:#1f4fa0;">0,30 GBP</div>
<div style="left:1162px;top:76px;width:17px;height:599px;background:#f0f0f0"></div>
<svg style="position:absolute;left:1163px;top:79px;" width="15" height="11" viewBox="0 0 15 11"><path d="M4.2 8.3L7.5 4.4L10.8 8.3" fill="none" stroke="#4a4a4a" stroke-width="2.2"/></svg>
<div style="left:1163px;top:93px;width:15px;height:382px;background:#cdcdcd"></div>
<svg style="position:absolute;left:1163px;top:661px;" width="15" height="11" viewBox="0 0 15 11"><path d="M3.5 3L7.5 7L11.5 3" fill="none" stroke="#444" stroke-width="1.6"/></svg>
<div style="left:951px;top:675px;width:231px;height:82px;background:#0054a6"></div>
<div style="left:954px;top:678px;width:225px;height:25px;background:#00aeef"></div>
<div class="t" style="left:958.5px;top:685.00px;font-size:13px;line-height:13px;color:#fff;font-weight:bold;">Nastavení</div>
<div style="left:1154px;top:681px;width:1px;height:19px;background:#1a96cc"></div>
<svg style="position:absolute;left:1159px;top:686px;" width="15" height="10" viewBox="0 0 15 10"><path d="M1 8L7.5 2L14 8" fill="none" stroke="#fff" stroke-width="1.3"/></svg>
<div style="left:954px;top:703px;width:225px;height:51px;background:#fafafa"></div>
<div class="t" style="left:968.8px;top:711.00px;font-size:12px;line-height:12px;color:#1f4fa0;">Období</div>
<div class="t" style="left:1077.5px;top:711.00px;font-size:12px;line-height:12px;color:#1f4fa0;">Sklad</div>
<div style="left:961px;top:724px;width:103px;height:23px;background:#ffffe6;border:1px solid #29b6f0"></div>
<div class="t" style="left:964px;top:731.00px;font-size:12.5px;line-height:12.5px;color:#111;">2021</div>
<svg style="position:absolute;left:1046px;top:729px;" width="15" height="12" viewBox="0 0 15 12"><rect x="2" y="1" width="2.2" height="2.2" fill="#1656ab"/><rect x="6.4" y="1" width="2.2" height="2.2" fill="#1656ab"/><rect x="10.8" y="1" width="2.2" height="2.2" fill="#1656ab"/><path d="M1.5 5L7.5 10.5L13.5 5" fill="none" stroke="#1656ab" stroke-width="1.3"/></svg>
<div style="left:1070px;top:724px;width:102px;height:23px;background:#ffffe6;border:1px solid #29b6f0"></div>
<svg style="position:absolute;left:1154px;top:729px;" width="15" height="12" viewBox="0 0 15 12"><rect x="2" y="1" width="2.2" height="2.2" fill="#1656ab"/><rect x="6.4" y="1" width="2.2" height="2.2" fill="#1656ab"/><rect x="10.8" y="1" width="2.2" height="2.2" fill="#1656ab"/><path d="M1.5 5L7.5 10.5L13.5 5" fill="none" stroke="#1656ab" stroke-width="1.3"/></svg>
<div style="left:477px;top:559px;width:452px;height:165px;background:#dbf1fc;border:1px solid #6d6d6d;box-shadow:1px 3px 12px rgba(0,0,0,0.26)"></div>
<div style="left:478px;top:560px;width:450px;height:30px;background:#fff"></div>
<svg style="position:absolute;left:485px;top:565px;" width="18" height="18" viewBox="0 0 18 18"><defs><linearGradient id="kg2" x1="0" y1="1" x2="1" y2="0"><stop offset="0" stop-color="#1a5fd8"/><stop offset="1" stop-color="#18c8f0"/></linearGradient></defs><rect x="1" y="1" width="2.2" height="16" fill="#0ae0f5"/><text x="4.2" y="11.2" font-family="Liberation Sans" font-weight="bold" font-size="6" textLength="9.4" lengthAdjust="spacingAndGlyphs" fill="#000" stroke="#000" stroke-width="0.35">K2</text><path d="M12.3 1.2L16.3 3.4V10.5" fill="none" stroke="#2ccbe8" stroke-width="1.1"/><path d="M16.9 10.2V17H13.2Q13 12.8 16.9 10.2Z" fill="url(#kg2)"/></svg>
<div class="t" style="left:507.3px;top:569.00px;font-size:12px;line-height:12px;color:#111;">Vložit označené do...</div>
<div style="left:808px;top:574px;width:11px;height:1px;background:#111"></div>
<div style="left:854px;top:569px;width:10px;height:10px;border:1px solid #111"></div>
<svg style="position:absolute;left:899px;top:569px;" width="11" height="11" viewBox="0 0 11 11"><path d="M0.5 0.5L10.5 10.5M10.5 0.5L0.5 10.5" stroke="#111" stroke-width="1.1"/></svg>
<div class="t" style="left:488.3px;top:595.00px;font-size:12px;line-height:12px;color:#1f52aa;">Cíl</div>
<div style="left:481px;top:608px;width:444px;height:23px;background:#ffffe6;border:1.5px solid #16aef0"></div>
<div class="t" style="left:484.4px;top:615.00px;font-size:12.5px;line-height:12.5px;color:#111;">Kontejner</div>
<svg style="position:absolute;left:906px;top:613px;" width="14" height="13" viewBox="0 0 14 13"><path d="M1.5 1.5H12.5" stroke="#1656ab" stroke-width="1.3"/><path d="M1.5 4.5L7 10L12.5 4.5" fill="none" stroke="#1656ab" stroke-width="1.3"/></svg>
<div style="left:481px;top:634px;width:444px;height:1px;background:#b8e2f6"></div>
<div style="left:481px;top:640px;width:19px;height:19px;background:#fffde6;border:2px solid #0a4a9e"></div>
<div style="left:504px;top:641px;width:258px;height:17px;border:1px dotted #222"></div>
<div class="t" style="left:505.6px;top:644.00px;font-size:12px;line-height:12px;color:#1f52aa;">Přidat vybranou skupinu záznamů do kontejneru</div>
<div style="left:482px;top:670px;width:17px;height:17px;background:#0a4a9e"></div>
<svg style="position:absolute;left:482px;top:670px;" width="17" height="17" viewBox="0 0 17 17"><path d="M3.5 8.5L7 12L13.5 5" fill="none" stroke="#fffde6" stroke-width="2"/></svg>
<div class="t" style="left:505.6px;top:673.00px;font-size:12px;line-height:12px;color:#1f52aa;">Vytvořit kontejner obsahující pouze vybranou skupinu záznamů</div>
<div style="left:631px;top:696px;width:146px;height:25px;background:#00aeef;border:1px solid #e6f8ff"></div>
<div style="left:781px;top:696px;width:145px;height:25px;background:#00aeef;border:1px solid #e6f8ff"></div>
<div class="t" style="left:664.0px;width:80px;text-align:center;top:703.00px;font-size:12px;line-height:12px;color:#fff;">OK</div>
<div class="t" style="left:813.5px;width:80px;text-align:center;top:703.00px;font-size:12px;line-height:12px;color:#fff;"><u>S</u>torno</div>
</body></html>
